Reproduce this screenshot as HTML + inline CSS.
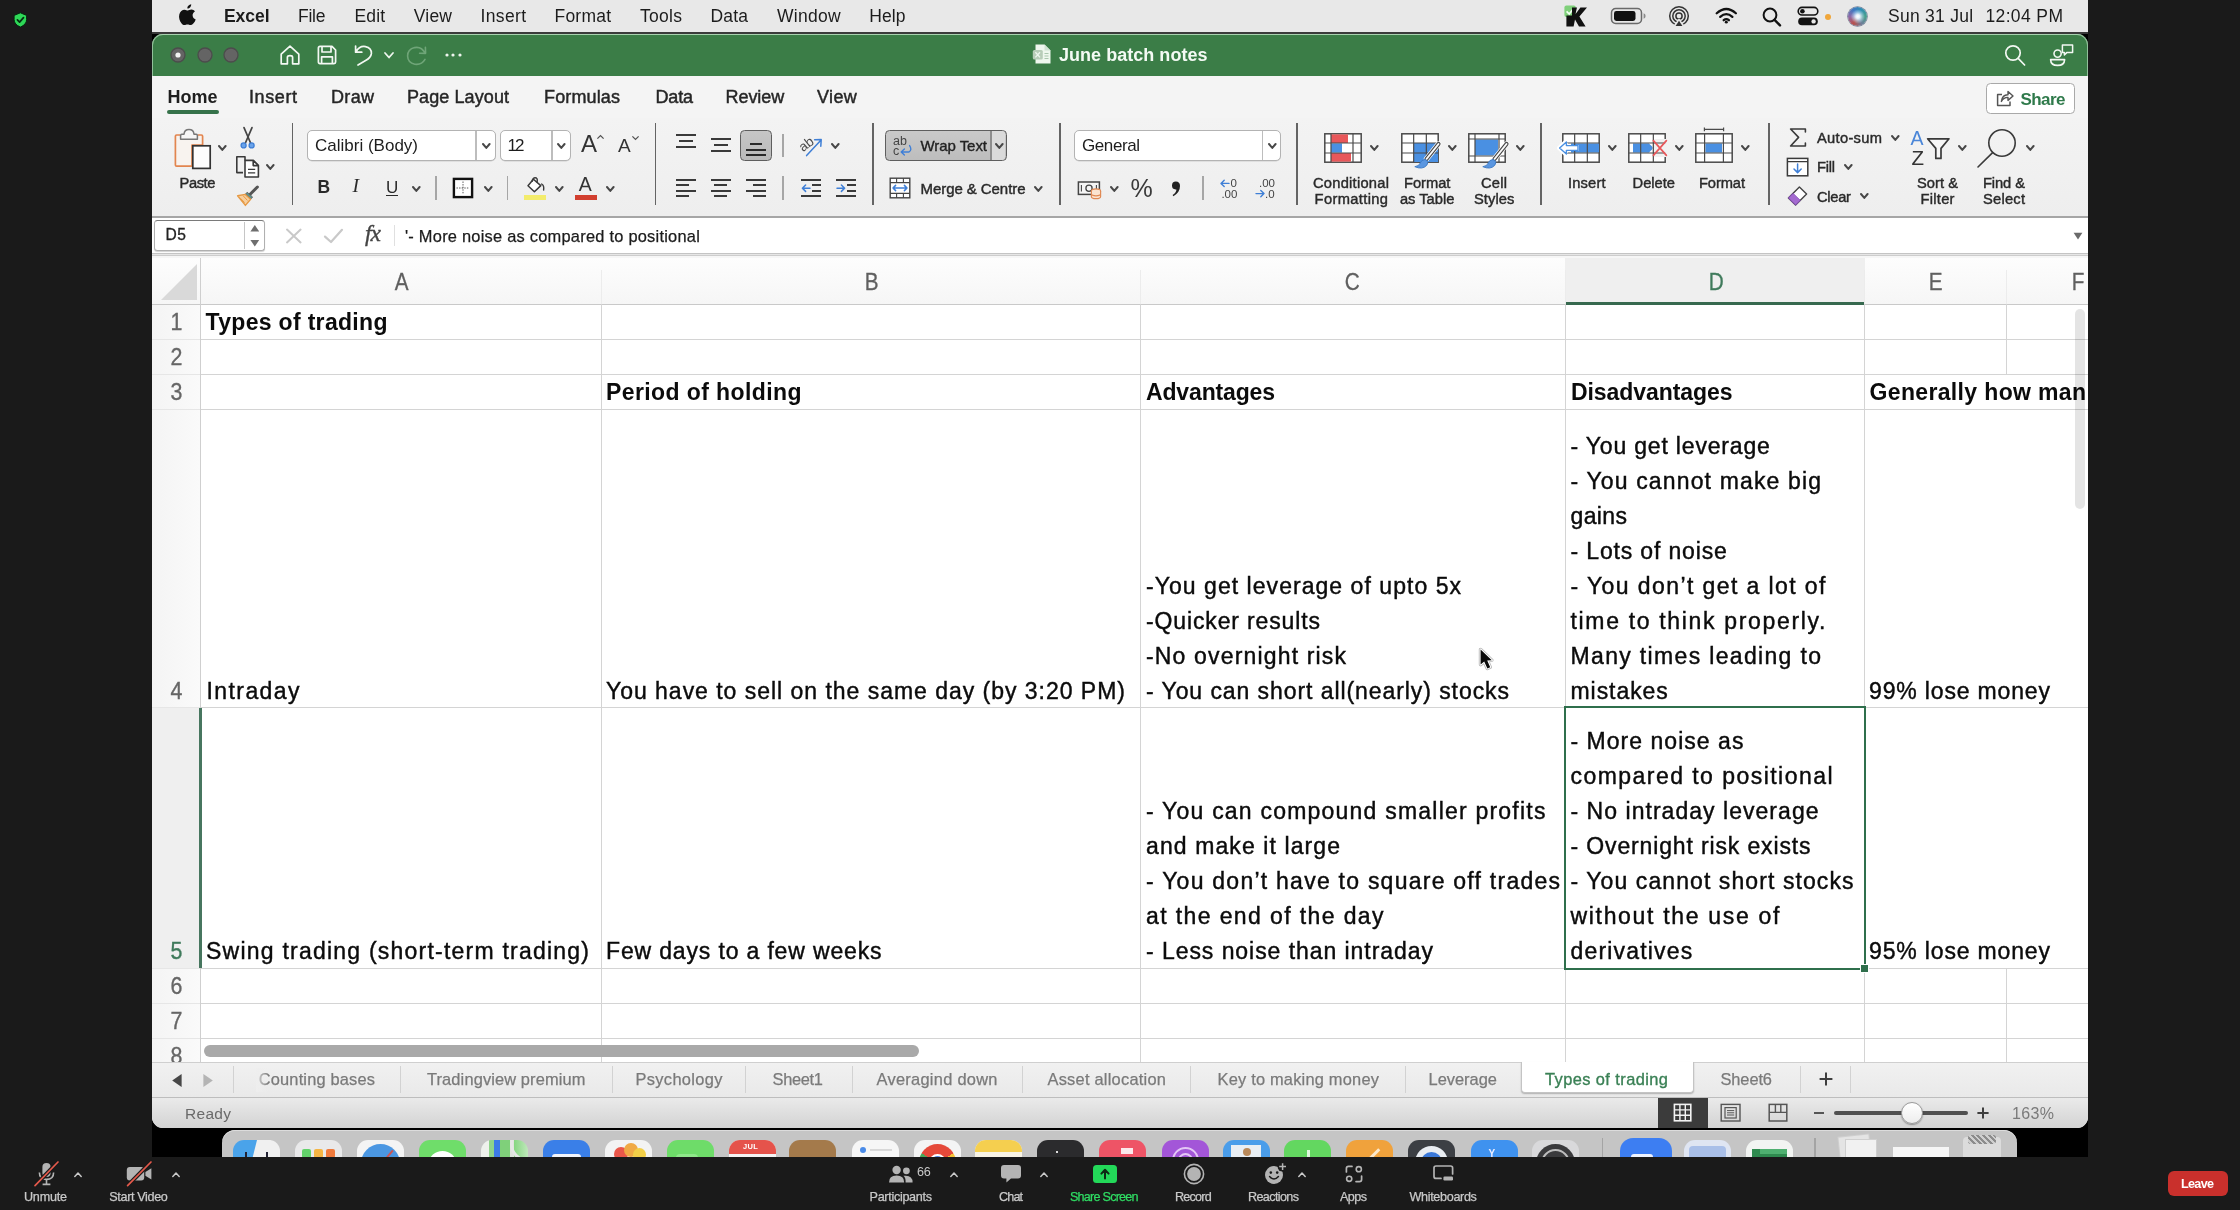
<!DOCTYPE html>
<html><head><meta charset="utf-8"><title>Zoom Meeting</title>
<style>
html,body{margin:0;padding:0}
body{width:2240px;height:1210px;background:#1a1a1a;position:relative;overflow:hidden;font-family:"Liberation Sans",sans-serif}
.b{position:absolute;display:block}
.t{position:absolute;white-space:nowrap;font-family:"Liberation Sans",sans-serif}
</style></head><body><div id="root" style="position:absolute;left:0;top:0;width:2240px;height:1210px;will-change:transform">
<div class="b" style="left:152px;top:0px;width:1936px;height:1157px;background:#000"></div>
<div class="b" style="left:152px;top:0px;width:1936px;height:32px;background:#e8e8e8"></div>
<div class="b" style="left:152px;top:32px;width:1936px;height:2px;background:#3a3a3a"></div>
<div class="b" id="win" style="left:152px;top:34px;width:1936px;height:1094px;border-radius:11px 11px 11px 11px;overflow:hidden;background:#fff">
<div class="b" style="left:-152px;top:-34px;width:2240px;height:1210px">
<div class="b" style="left:152px;top:34px;width:1936px;height:42px;background:#3b7d47"></div>
<div class="b" style="left:152px;top:34px;width:1936px;height:1px;background:#8fbf98"></div>
<div class="b" style="left:152px;top:34px;width:1936px;height:60px;border:1px solid rgba(175,215,182,.75);border-bottom:none;border-radius:11px 11px 0 0;box-sizing:border-box;clip-path:inset(0 0 18px 0)"></div>
<div class="b" style="left:152px;top:76px;width:1936px;height:42px;background:#f4f4f4"></div>
<div class="b" style="left:152px;top:118px;width:1936px;height:98px;background:linear-gradient(#f3f3f3,#eeeeee)"></div>
<div class="b" style="left:152px;top:216px;width:1936px;height:2px;background:#a6a6a6"></div>
<div class="b" style="left:152px;top:218px;width:1936px;height:36px;background:#fff"></div>
<div class="b" style="left:152px;top:253px;width:1936px;height:1px;background:#c4c4c4"></div>
<div class="b" style="left:152px;top:254px;width:1936px;height:1px;background:#e6e6e6"></div>
<div class="b" style="left:152px;top:255px;width:1936px;height:1px;background:#cdcdcd"></div>
<div class="b" style="left:152px;top:256px;width:1936px;height:2px;background:#f6f6f6"></div>
<div class="b" style="left:152px;top:258px;width:1936px;height:46px;background:linear-gradient(#fdfdfd,#f6f6f6)"></div>
<div class="b" style="left:152px;top:304px;width:48px;height:758px;background:linear-gradient(90deg,#f4f4f4,#fafafa)"></div>
<div class="b" style="left:152px;top:708px;width:47px;height:260px;background:#efefef"></div>
<div class="b" style="left:1565px;top:258px;width:300px;height:45px;background:#efefef"></div>
<div class="b" style="left:1565px;top:302px;width:300px;height:2.6px;background:#37694f"></div>
<div class="b" style="left:152px;top:304px;width:1413px;height:1px;background:#c9c9c9"></div>
<div class="b" style="left:1865px;top:304px;width:223px;height:1px;background:#c9c9c9"></div>
<div class="b" style="left:200px;top:339px;width:1888px;height:1px;background:#d4d4d4"></div>
<div class="b" style="left:152px;top:339px;width:48px;height:1px;background:#e6e6e6"></div>
<div class="b" style="left:200px;top:374px;width:1888px;height:1px;background:#d4d4d4"></div>
<div class="b" style="left:152px;top:374px;width:48px;height:1px;background:#e6e6e6"></div>
<div class="b" style="left:200px;top:409px;width:1888px;height:1px;background:#d4d4d4"></div>
<div class="b" style="left:152px;top:409px;width:48px;height:1px;background:#e6e6e6"></div>
<div class="b" style="left:200px;top:707px;width:1888px;height:1px;background:#d4d4d4"></div>
<div class="b" style="left:152px;top:707px;width:48px;height:1px;background:#e6e6e6"></div>
<div class="b" style="left:200px;top:968px;width:1888px;height:1px;background:#d4d4d4"></div>
<div class="b" style="left:152px;top:968px;width:48px;height:1px;background:#e6e6e6"></div>
<div class="b" style="left:200px;top:1003px;width:1888px;height:1px;background:#d4d4d4"></div>
<div class="b" style="left:152px;top:1003px;width:48px;height:1px;background:#e6e6e6"></div>
<div class="b" style="left:200px;top:1038px;width:1888px;height:1px;background:#d4d4d4"></div>
<div class="b" style="left:152px;top:1038px;width:48px;height:1px;background:#e6e6e6"></div>
<div class="b" style="left:200px;top:258px;width:1px;height:804px;background:#cfcfcf"></div>
<div class="b" style="left:601px;top:304px;width:1px;height:758px;background:#d4d4d4"></div>
<div class="b" style="left:1140px;top:304px;width:1px;height:758px;background:#d4d4d4"></div>
<div class="b" style="left:1565px;top:304px;width:1px;height:758px;background:#d4d4d4"></div>
<div class="b" style="left:1864px;top:304px;width:1px;height:758px;background:#d4d4d4"></div>
<div class="b" style="left:601px;top:270px;width:1px;height:34px;background:#ececec"></div>
<div class="b" style="left:1140px;top:270px;width:1px;height:34px;background:#ececec"></div>
<div class="b" style="left:1565px;top:270px;width:1px;height:34px;background:#ececec"></div>
<div class="b" style="left:1864px;top:270px;width:1px;height:34px;background:#ececec"></div>
<div class="b" style="left:2006px;top:270px;width:1px;height:34px;background:#ececec"></div>
<div class="b" style="left:2006px;top:304px;width:1px;height:70px;background:#d4d4d4"></div>
<div class="b" style="left:2006px;top:968px;width:1px;height:94px;background:#d4d4d4"></div>
<svg class="b" style="left:160px;top:263px;" width="38" height="38" viewBox="0 0 38 38"><path d="M37 1 L37 37 L1 37 Z" fill="#d9d9d9"/></svg>
<div class="t" style="left:393.83px;top:269.00px;font-size:23px;line-height:26px;color:#5f5f5f;letter-spacing:0.000px;transform:scaleX(.9);-webkit-text-stroke:0.3px currentColor;">A</div>
<div class="t" style="left:863.83px;top:269.00px;font-size:23px;line-height:26px;color:#5f5f5f;letter-spacing:0.000px;transform:scaleX(.9);-webkit-text-stroke:0.3px currentColor;">B</div>
<div class="t" style="left:1344.20px;top:269.00px;font-size:23px;line-height:26px;color:#5f5f5f;letter-spacing:0.000px;transform:scaleX(.9);-webkit-text-stroke:0.3px currentColor;">C</div>
<div class="t" style="left:1927.83px;top:269.00px;font-size:23px;line-height:26px;color:#5f5f5f;letter-spacing:0.000px;transform:scaleX(.9);-webkit-text-stroke:0.3px currentColor;">E</div>
<div class="t" style="left:2070.98px;top:269.00px;font-size:23px;line-height:26px;color:#5f5f5f;letter-spacing:0.000px;transform:scaleX(.9);-webkit-text-stroke:0.3px currentColor;">F</div>
<div class="t" style="left:1707.70px;top:269.00px;font-size:23px;line-height:26px;color:#3f7a5b;letter-spacing:0.000px;transform:scaleX(.9);-webkit-text-stroke:0.3px currentColor;">D</div>
<div class="t" style="left:170.10px;top:309.00px;font-size:23px;line-height:26px;color:#666;letter-spacing:0.000px;transform:scaleX(.93);-webkit-text-stroke:0.35px #666;">1</div>
<div class="t" style="left:170.10px;top:344.00px;font-size:23px;line-height:26px;color:#666;letter-spacing:0.000px;transform:scaleX(.93);-webkit-text-stroke:0.35px #666;">2</div>
<div class="t" style="left:170.10px;top:379.00px;font-size:23px;line-height:26px;color:#666;letter-spacing:0.000px;transform:scaleX(.93);-webkit-text-stroke:0.35px #666;">3</div>
<div class="t" style="left:170.10px;top:678.00px;font-size:23px;line-height:26px;color:#666;letter-spacing:0.000px;transform:scaleX(.93);-webkit-text-stroke:0.35px #666;">4</div>
<div class="t" style="left:170.10px;top:973.00px;font-size:23px;line-height:26px;color:#666;letter-spacing:0.000px;transform:scaleX(.93);-webkit-text-stroke:0.35px #666;">6</div>
<div class="t" style="left:170.10px;top:1008.00px;font-size:23px;line-height:26px;color:#666;letter-spacing:0.000px;transform:scaleX(.93);-webkit-text-stroke:0.35px #666;">7</div>
<div class="t" style="left:170.10px;top:1043.00px;font-size:23px;line-height:26px;color:#666;letter-spacing:0.000px;transform:scaleX(.93);-webkit-text-stroke:0.35px #666;">8</div>
<div class="t" style="left:170.10px;top:938.00px;font-size:23px;line-height:26px;color:#3f7a5b;letter-spacing:0.000px;transform:scaleX(.93);-webkit-text-stroke:0.35px #3f7a5b;">5</div>
<div class="b" style="left:198.8px;top:708px;width:2.8px;height:260px;background:#47765f"></div>
<div class="t" style="left:205.50px;top:309.00px;font-size:23px;line-height:26px;font-weight:bold;color:#0b0b0b;letter-spacing:0.320px;">Types of trading</div>
<div class="t" style="left:606.00px;top:379.00px;font-size:23px;line-height:26px;font-weight:bold;color:#0b0b0b;letter-spacing:0.401px;">Period of holding</div>
<div class="t" style="left:1146.00px;top:379.00px;font-size:23px;line-height:26px;font-weight:bold;color:#0b0b0b;letter-spacing:-0.153px;">Advantages</div>
<div class="t" style="left:1571.00px;top:379.00px;font-size:23px;line-height:26px;font-weight:bold;color:#0b0b0b;letter-spacing:-0.071px;">Disadvantages</div>
<div class="b" style="left:1865px;top:376px;width:223px;height:32px;overflow:hidden">
<div class="t" style="left:4.5px;top:3px;font-size:23px;line-height:26px;font-weight:bold;color:#0b0b0b;letter-spacing:0.35px">Generally how man</div></div>
<div class="t" style="left:206.50px;top:678.00px;font-size:23px;line-height:26px;color:#0b0b0b;letter-spacing:1.413px;-webkit-text-stroke:0.42px #0b0b0b;">Intraday</div>
<div class="t" style="left:606.00px;top:678.00px;font-size:23px;line-height:26px;color:#0b0b0b;letter-spacing:0.976px;-webkit-text-stroke:0.42px #0b0b0b;">You have to sell on the same day (by 3:20 PM)</div>
<div class="t" style="left:1146.00px;top:573.00px;font-size:23px;line-height:26px;color:#0b0b0b;letter-spacing:1.042px;-webkit-text-stroke:0.42px #0b0b0b;">-You get leverage of upto 5x</div>
<div class="t" style="left:1146.00px;top:608.00px;font-size:23px;line-height:26px;color:#0b0b0b;letter-spacing:0.864px;-webkit-text-stroke:0.42px #0b0b0b;">-Quicker results</div>
<div class="t" style="left:1146.00px;top:643.00px;font-size:23px;line-height:26px;color:#0b0b0b;letter-spacing:1.163px;-webkit-text-stroke:0.42px #0b0b0b;">-No overnight risk</div>
<div class="t" style="left:1146.00px;top:678.00px;font-size:23px;line-height:26px;color:#0b0b0b;letter-spacing:0.928px;-webkit-text-stroke:0.42px #0b0b0b;">- You can short all(nearly) stocks</div>
<div class="t" style="left:1570.50px;top:433.00px;font-size:23px;line-height:26px;color:#0b0b0b;letter-spacing:0.816px;-webkit-text-stroke:0.42px #0b0b0b;">- You get leverage</div>
<div class="t" style="left:1570.50px;top:468.00px;font-size:23px;line-height:26px;color:#0b0b0b;letter-spacing:1.145px;-webkit-text-stroke:0.42px #0b0b0b;">- You cannot make big</div>
<div class="t" style="left:1570.50px;top:503.00px;font-size:23px;line-height:26px;color:#0b0b0b;letter-spacing:0.354px;-webkit-text-stroke:0.42px #0b0b0b;">gains</div>
<div class="t" style="left:1570.50px;top:538.00px;font-size:23px;line-height:26px;color:#0b0b0b;letter-spacing:0.845px;-webkit-text-stroke:0.42px #0b0b0b;">- Lots of noise</div>
<div class="t" style="left:1570.50px;top:573.00px;font-size:23px;line-height:26px;color:#0b0b0b;letter-spacing:1.408px;-webkit-text-stroke:0.42px #0b0b0b;">- You don’t get a lot of</div>
<div class="t" style="left:1570.50px;top:608.00px;font-size:23px;line-height:26px;color:#0b0b0b;letter-spacing:1.670px;-webkit-text-stroke:0.42px #0b0b0b;">time to think properly.</div>
<div class="t" style="left:1570.50px;top:643.00px;font-size:23px;line-height:26px;color:#0b0b0b;letter-spacing:1.339px;-webkit-text-stroke:0.42px #0b0b0b;">Many times leading to</div>
<div class="t" style="left:1570.50px;top:678.00px;font-size:23px;line-height:26px;color:#0b0b0b;letter-spacing:0.937px;-webkit-text-stroke:0.42px #0b0b0b;">mistakes</div>
<div class="t" style="left:1869.00px;top:678.00px;font-size:23px;line-height:26px;color:#0b0b0b;letter-spacing:0.843px;-webkit-text-stroke:0.42px #0b0b0b;">99% lose money</div>
<div class="t" style="left:206.00px;top:938.00px;font-size:23px;line-height:26px;color:#0b0b0b;letter-spacing:1.225px;-webkit-text-stroke:0.42px #0b0b0b;">Swing trading (short-term trading)</div>
<div class="t" style="left:606.00px;top:938.00px;font-size:23px;line-height:26px;color:#0b0b0b;letter-spacing:0.844px;-webkit-text-stroke:0.42px #0b0b0b;">Few days to a few weeks</div>
<div class="t" style="left:1146.00px;top:798.00px;font-size:23px;line-height:26px;color:#0b0b0b;letter-spacing:1.217px;-webkit-text-stroke:0.42px #0b0b0b;">- You can compound smaller profits</div>
<div class="t" style="left:1146.00px;top:833.00px;font-size:23px;line-height:26px;color:#0b0b0b;letter-spacing:1.098px;-webkit-text-stroke:0.42px #0b0b0b;">and make it large</div>
<div class="t" style="left:1146.00px;top:868.00px;font-size:23px;line-height:26px;color:#0b0b0b;letter-spacing:1.247px;-webkit-text-stroke:0.42px #0b0b0b;">- You don’t have to square off trades</div>
<div class="t" style="left:1146.00px;top:903.00px;font-size:23px;line-height:26px;color:#0b0b0b;letter-spacing:1.389px;-webkit-text-stroke:0.42px #0b0b0b;">at the end of the day</div>
<div class="t" style="left:1146.00px;top:938.00px;font-size:23px;line-height:26px;color:#0b0b0b;letter-spacing:0.945px;-webkit-text-stroke:0.42px #0b0b0b;">- Less noise than intraday</div>
<div class="t" style="left:1570.50px;top:728.00px;font-size:23px;line-height:26px;color:#0b0b0b;letter-spacing:1.028px;-webkit-text-stroke:0.42px #0b0b0b;">- More noise as</div>
<div class="t" style="left:1570.50px;top:763.00px;font-size:23px;line-height:26px;color:#0b0b0b;letter-spacing:1.456px;-webkit-text-stroke:0.42px #0b0b0b;">compared to positional</div>
<div class="t" style="left:1570.50px;top:798.00px;font-size:23px;line-height:26px;color:#0b0b0b;letter-spacing:1.034px;-webkit-text-stroke:0.42px #0b0b0b;">- No intraday leverage</div>
<div class="t" style="left:1570.50px;top:833.00px;font-size:23px;line-height:26px;color:#0b0b0b;letter-spacing:0.859px;-webkit-text-stroke:0.42px #0b0b0b;">- Overnight risk exists</div>
<div class="t" style="left:1570.50px;top:868.00px;font-size:23px;line-height:26px;color:#0b0b0b;letter-spacing:1.084px;-webkit-text-stroke:0.42px #0b0b0b;">- You cannot short stocks</div>
<div class="t" style="left:1570.50px;top:903.00px;font-size:23px;line-height:26px;color:#0b0b0b;letter-spacing:1.677px;-webkit-text-stroke:0.42px #0b0b0b;">without the use of</div>
<div class="t" style="left:1570.50px;top:938.00px;font-size:23px;line-height:26px;color:#0b0b0b;letter-spacing:1.176px;-webkit-text-stroke:0.42px #0b0b0b;">derivatives</div>
<div class="t" style="left:1869.00px;top:938.00px;font-size:23px;line-height:26px;color:#0b0b0b;letter-spacing:0.843px;-webkit-text-stroke:0.42px #0b0b0b;">95% lose money</div>
<div class="b" style="left:1564px;top:706px;width:302px;height:264px;border:2px solid #2f6f4c;box-sizing:border-box"></div>
<div class="b" style="left:1860px;top:964px;width:9px;height:9px;background:#fff"></div>
<div class="b" style="left:1861px;top:965px;width:7px;height:7px;background:#2f6f4c"></div>
<div class="b" style="left:2075px;top:309px;width:10px;height:200px;background:rgba(0,0,0,.105);border-radius:5px"></div>
<div class="b" style="left:204px;top:1045px;width:715px;height:12px;background:#a9a9a9;border-radius:6px"></div>
<svg class="b" style="left:1474px;top:642px;" width="24" height="32" viewBox="0 0 24 32"><path d="M6.6 7.6 L6.6 22.6 L10.2 19.4 L13.4 26.4 L16.2 25.2 L13.2 18.4 L17.8 18.2 Z" fill="#0a0a0a" stroke="rgba(120,120,120,.55)" stroke-width="3.6" stroke-linejoin="round"/><path d="M6.6 7.6 L6.6 22.6 L10.2 19.4 L13.4 26.4 L16.2 25.2 L13.2 18.4 L17.8 18.2 Z" fill="#0a0a0a" stroke="#fff" stroke-width="2" stroke-linejoin="round"/><path d="M6.6 7.6 L6.6 22.6 L10.2 19.4 L13.4 26.4 L16.2 25.2 L13.2 18.4 L17.8 18.2 Z" fill="#0a0a0a"/></svg>
<svg class="b" style="left:167.5px;top:45px;" width="20" height="20" viewBox="0 0 20 20"><circle cx="10" cy="10" r="7" fill="#646464" stroke="#4c4c4c" stroke-width="1.3"/></svg>
<svg class="b" style="left:194.5px;top:45px;" width="20" height="20" viewBox="0 0 20 20"><circle cx="10" cy="10" r="7" fill="#646464" stroke="#4c4c4c" stroke-width="1.3"/></svg>
<svg class="b" style="left:221px;top:45px;" width="20" height="20" viewBox="0 0 20 20"><circle cx="10" cy="10" r="7" fill="#646464" stroke="#4c4c4c" stroke-width="1.3"/></svg>
<svg class="b" style="left:173.5px;top:51px;" width="8" height="8" viewBox="0 0 8 8"><circle cx="4" cy="4" r="2.6" fill="#f2f2f2"/></svg>
<svg class="b" style="left:279px;top:44px;" width="22" height="22" viewBox="0 0 22 22"><path d="M2.2 10.2 L11 2.2 L19.8 10.2 L19.8 19.8 L13.6 19.8 L13.6 13.2 Q13.6 11.6 11 11.6 Q8.4 11.6 8.4 13.2 L8.4 19.8 L2.2 19.8 Z" fill="none" stroke="#f3f8f3" stroke-width="1.7" stroke-linecap="round" stroke-linejoin="round"/></svg>
<svg class="b" style="left:316px;top:44px;" width="22" height="22" viewBox="0 0 22 22"><path d="M2.4 4 Q2.4 2.4 4 2.4 L16 2.4 L19.6 6 L19.6 18 Q19.6 19.6 18 19.6 L4 19.6 Q2.4 19.6 2.4 18 Z M6 2.6 L6 8 L15 8 L15 2.6 M5.6 19.4 L5.6 12.8 L16.4 12.8 L16.4 19.4" fill="none" stroke="#f3f8f3" stroke-width="1.7" stroke-linecap="round" stroke-linejoin="round"/></svg>
<svg class="b" style="left:353px;top:43px;" width="22" height="24" viewBox="0 0 22 24"><path d="M2.6 3 L2.6 9.2 L8.8 9.2 M3 8.8 Q6.5 2.6 12.5 3.6 Q18.6 5 18.4 10.4 Q18 14.6 12.6 17.6 L5 22" fill="none" stroke="#f3f8f3" stroke-width="1.7" stroke-linecap="round" stroke-linejoin="round"/></svg>
<svg class="b" style="left:382.7px;top:51.25px;" width="12" height="8.5" viewBox="0 0 12 8.5"><path d="M2 2 L6.0 6.5 L10 2" fill="none" stroke="#eef5ee" stroke-width="1.8" stroke-linecap="round" stroke-linejoin="round"/></svg>
<svg class="b" style="left:404px;top:43px;" width="26" height="24" viewBox="0 0 26 24"><path d="M21.4 4.4 L21.6 10.4 L15.6 10.2 M21 10 Q17.4 3.2 10.6 4.6 Q3.6 6.4 3.6 13 Q3.8 19.8 10.8 21.2 Q17.6 22.2 21 16.4" fill="none" stroke="#6fa578" stroke-width="1.6" stroke-linecap="round" stroke-linejoin="round"/></svg>
<svg class="b" style="left:444.5px;top:53px;" width="4" height="4" viewBox="0 0 4 4"><circle cx="2" cy="2" r="1.6" fill="#eef5ee"/></svg>
<svg class="b" style="left:451.3px;top:53px;" width="4" height="4" viewBox="0 0 4 4"><circle cx="2" cy="2" r="1.6" fill="#eef5ee"/></svg>
<svg class="b" style="left:458px;top:53px;" width="4" height="4" viewBox="0 0 4 4"><circle cx="2" cy="2" r="1.6" fill="#eef5ee"/></svg>
<svg class="b" style="left:1032px;top:43px;" width="20" height="22" viewBox="0 0 20 22"><path d="M3.5 1.5 L12.5 1.5 L18.5 7.5 L18.5 20.5 L3.5 20.5 Z" fill="#eef7ee"/><path d="M12.5 1.5 L12.5 7.5 L18.5 7.5 Z" fill="#cfe3d2"/><rect x="0.8" y="7" width="10" height="9.5" rx="1.5" fill="#b8cdb9"/><path d="M3.4 9.3 L8 14.4 M8 9.3 L3.4 14.4" stroke="#eef7ee" stroke-width="1.3"/><path d="M12.5 10.5h4M12.5 13h4M12.5 15.5h4" stroke="#a9c6ad" stroke-width="1.2"/></svg>
<div class="t" style="left:1059.00px;top:45.00px;font-size:18px;line-height:20px;font-weight:bold;color:#f4faf4;letter-spacing:0.032px;">June batch notes</div>
<svg class="b" style="left:2003px;top:43px;" width="24" height="24" viewBox="0 0 24 24"><circle cx="10" cy="10" r="7.2" fill="none" stroke="#f3f8f3" stroke-width="1.7" stroke-linecap="round" stroke-linejoin="round"/><path d="M15.2 15.4 L21.6 22" fill="none" stroke="#f3f8f3" stroke-width="1.7" stroke-linecap="round" stroke-linejoin="round"/></svg>
<svg class="b" style="left:2048px;top:42px;" width="28" height="26" viewBox="0 0 28 26"><circle cx="9.6" cy="11.6" r="3.6" fill="none" stroke="#f3f8f3" stroke-width="1.6"/><path d="M2.6 17.6 L16.6 17.6 Q16.4 23.4 9.6 23.4 Q2.8 23.4 2.6 17.6 Z" fill="none" stroke="#f3f8f3" stroke-width="1.6" stroke-linejoin="round"/><path d="M14.4 3 L24.6 3 L24.6 10.4 L19 10.4 L16.4 13 L16.4 10.4 L14.4 10.4 Z" fill="none" stroke="#f3f8f3" stroke-width="1.5" stroke-linejoin="round"/></svg>
<div class="t" style="left:167.50px;top:87.00px;font-size:18px;line-height:20px;font-weight:bold;color:#1e1e1e;letter-spacing:-0.003px;">Home</div>
<div class="b" style="left:166.5px;top:110px;width:52px;height:4px;background:#36724a;border-radius:2px"></div>
<div class="t" style="left:249.00px;top:87.00px;font-size:18px;line-height:20px;color:#262626;letter-spacing:0.596px;-webkit-text-stroke:0.45px #262626;">Insert</div>
<div class="t" style="left:331.00px;top:87.00px;font-size:18px;line-height:20px;color:#262626;letter-spacing:0.332px;-webkit-text-stroke:0.45px #262626;">Draw</div>
<div class="t" style="left:407.00px;top:87.00px;font-size:18px;line-height:20px;color:#262626;letter-spacing:0.092px;-webkit-text-stroke:0.45px #262626;">Page Layout</div>
<div class="t" style="left:544.00px;top:87.00px;font-size:18px;line-height:20px;color:#262626;letter-spacing:0.141px;-webkit-text-stroke:0.45px #262626;">Formulas</div>
<div class="t" style="left:655.50px;top:87.00px;font-size:18px;line-height:20px;color:#262626;letter-spacing:-0.174px;-webkit-text-stroke:0.45px #262626;">Data</div>
<div class="t" style="left:725.50px;top:87.00px;font-size:18px;line-height:20px;color:#262626;letter-spacing:-0.054px;-webkit-text-stroke:0.45px #262626;">Review</div>
<div class="t" style="left:817.00px;top:87.00px;font-size:18px;line-height:20px;color:#262626;letter-spacing:0.353px;-webkit-text-stroke:0.45px #262626;">View</div>
<div class="b" style="left:1985.5px;top:82.5px;width:89px;height:31.5px;background:#fff;border:1.5px solid #a9a9a9;border-radius:4.5px;box-sizing:border-box"></div>
<svg class="b" style="left:1995px;top:88px;" width="20" height="20" viewBox="0 0 20 20"><path d="M7 6.4 L2.6 6.4 L2.6 17.4 L15 17.4 L15 13.6" fill="none" stroke="#555" stroke-width="1.5" stroke-linejoin="round"/><path d="M6.4 13.4 Q7.4 6.6 13 6.8 L13 3.4 L18 8 L13 12.4 L13 9.4 Q9 9.2 6.4 13.4 Z" fill="none" stroke="#555" stroke-width="1.4" stroke-linejoin="round"/></svg>
<div class="t" style="left:2020.50px;top:90.00px;font-size:17px;line-height:19px;font-weight:bold;color:#2f7a4b;letter-spacing:-0.562px;">Share</div>
<div class="b" style="left:291.825px;top:122.5px;width:1.35px;height:82.5px;background:#646464"></div>
<div class="b" style="left:654.825px;top:122.5px;width:1.35px;height:82.5px;background:#646464"></div>
<div class="b" style="left:872.325px;top:122.5px;width:1.35px;height:82.5px;background:#646464"></div>
<div class="b" style="left:1059.325px;top:122.5px;width:1.35px;height:82.5px;background:#646464"></div>
<div class="b" style="left:1296.325px;top:122.5px;width:1.35px;height:82.5px;background:#646464"></div>
<div class="b" style="left:1540.325px;top:122.5px;width:1.35px;height:82.5px;background:#646464"></div>
<div class="b" style="left:1768.325px;top:122.5px;width:1.35px;height:82.5px;background:#646464"></div>
<svg class="b" style="left:173px;top:127px;" width="40" height="44" viewBox="0 0 40 44"><path d="M7 8 L3.6 8 Q2.4 8 2.4 9.2 L2.4 38 Q2.4 39.2 3.6 39.2 L19 39.2 L19 18 L29.6 18 L29.6 9.2 Q29.6 8 28.4 8 L25 8" fill="#f8f3ef" stroke="#e2854f" stroke-width="1.7" stroke-linejoin="round"/><path d="M7.6 12.2 L7.6 8.4 Q7.6 7.2 8.8 7.2 L11 7.2 Q11.4 2.4 16 2.4 Q20.6 2.4 21 7.2 L23.2 7.2 Q24.4 7.2 24.4 8.4 L24.4 12.2 Z" fill="#f6f6f6" stroke="#777" stroke-width="1.5" stroke-linejoin="round"/><rect x="19.8" y="18.8" width="17.4" height="22.6" fill="#fdfdfd" stroke="#333" stroke-width="1.7"/></svg>
<svg class="b" style="left:217.2px;top:143.55px;" width="10.6" height="7.9" viewBox="0 0 10.6 7.9"><path d="M2 2 L5.3 5.9 L8.6 2" fill="none" stroke="#484848" stroke-width="2.0" stroke-linecap="round" stroke-linejoin="round"/></svg>
<div class="t" style="left:179.50px;top:175.00px;font-size:14.7px;line-height:16px;color:#2a2a2a;letter-spacing:-0.397px;-webkit-text-stroke:0.42px #2a2a2a;">Paste</div>
<svg class="b" style="left:239px;top:126px;" width="18" height="24" viewBox="0 0 18 24"><path d="M5 1.6 L11.6 17 M13 1.6 L6.4 17" stroke="#444" stroke-width="1.7" stroke-linecap="round" fill="none"/><circle cx="4.6" cy="19.4" r="2.5" fill="#6aa3ea" stroke="#3f7fd6" stroke-width="1.3"/><circle cx="12.6" cy="19.4" r="2.5" fill="#6aa3ea" stroke="#3f7fd6" stroke-width="1.3"/></svg>
<svg class="b" style="left:235px;top:155px;" width="26" height="24" viewBox="0 0 26 24"><path d="M10 5.4 L10 1.8 L1.8 1.8 L1.8 17.6 L8 17.6" fill="none" stroke="#3a3a3a" stroke-width="1.6" stroke-linejoin="round"/><path d="M10 5.4 L18.4 5.4 L23.4 10.4 L23.4 22 L10 22 Z M18.2 5.6 L18.2 10.6 L23.2 10.6" fill="#fff" stroke="#3a3a3a" stroke-width="1.6" stroke-linejoin="round"/><path d="M13 14.4 h7.2 M13 17.8 h7.2" stroke="#3a3a3a" stroke-width="1.3"/></svg>
<svg class="b" style="left:265.2px;top:163.05px;" width="10.6" height="7.9" viewBox="0 0 10.6 7.9"><path d="M2 2 L5.3 5.9 L8.6 2" fill="none" stroke="#484848" stroke-width="2.0" stroke-linecap="round" stroke-linejoin="round"/></svg>
<svg class="b" style="left:236px;top:184px;" width="26" height="24" viewBox="0 0 26 24"><path d="M21.4 3 L14.4 10" stroke="#555" stroke-width="3" stroke-linecap="round"/><path d="M11.2 8.2 L16.6 13 L14.8 15 L9.4 10.2 Z" fill="#5f8f8a" stroke="#555" stroke-width="0.8"/><path d="M9.2 10.4 L14.6 15.2 L9.4 21.4 L1.6 11.8 Z" fill="#f7cf9e" stroke="#e69a45" stroke-width="1.4" stroke-linejoin="round"/><path d="M4.6 14.4 L8.6 18.6 M7 11.6 L11.4 16.4" stroke="#e69a45" stroke-width="1"/></svg>
<div class="b" style="left:307px;top:129.5px;width:189px;height:31.5px;background:#fff;border:1.5px solid #b3b3b3;border-radius:5px;box-sizing:border-box;box-shadow:0 0.5px 0.5px rgba(0,0,0,.15)"></div>
<div class="b" style="left:475.4px;top:131px;width:1.3px;height:28.5px;background:#bdbdbd"></div>
<div class="t" style="left:315.00px;top:136.00px;font-size:17px;line-height:19px;color:#1d1d1d;letter-spacing:0.002px;">Calibri (Body)</div>
<svg class="b" style="left:480.5px;top:142.25px;" width="10.6" height="7.9" viewBox="0 0 10.6 7.9"><path d="M2 2 L5.3 5.9 L8.6 2" fill="none" stroke="#484848" stroke-width="2.0" stroke-linecap="round" stroke-linejoin="round"/></svg>
<div class="b" style="left:499.5px;top:129.5px;width:71.5px;height:31.5px;background:#fff;border:1.5px solid #b3b3b3;border-radius:5px;box-sizing:border-box;box-shadow:0 0.5px 0.5px rgba(0,0,0,.15)"></div>
<div class="b" style="left:551.4px;top:131px;width:1.3px;height:28.5px;background:#bdbdbd"></div>
<div class="t" style="left:507.50px;top:136.00px;font-size:17px;line-height:19px;color:#1d1d1d;letter-spacing:-1.909px;">12</div>
<svg class="b" style="left:556.2px;top:142.25px;" width="10.6" height="7.9" viewBox="0 0 10.6 7.9"><path d="M2 2 L5.3 5.9 L8.6 2" fill="none" stroke="#484848" stroke-width="2.0" stroke-linecap="round" stroke-linejoin="round"/></svg>
<div class="t" style="left:581.00px;top:130.00px;font-size:24px;line-height:27px;color:#333;letter-spacing:0.000px;font-weight:normal">A</div>
<svg class="b" style="left:596px;top:134px;" width="9" height="6" viewBox="0 0 9 6"><path d="M1.4 4.6 L4.5 1.6 L7.6 4.6" fill="none" stroke="#555" stroke-width="1.3"/></svg>
<div class="t" style="left:618.00px;top:135.00px;font-size:19px;line-height:21px;color:#333;letter-spacing:0.000px;">A</div>
<svg class="b" style="left:630.5px;top:135px;" width="9" height="6" viewBox="0 0 9 6"><path d="M1.4 1.4 L4.5 4.4 L7.6 1.4" fill="none" stroke="#555" stroke-width="1.3"/></svg>
<div class="t" style="left:317.50px;top:177.00px;font-size:17.5px;line-height:20px;font-weight:bold;color:#2a2a2a;letter-spacing:0.000px;">B</div>
<div class="t" style="left:352.5px;top:174.6px;font-family:'Liberation Serif',serif;font-style:italic;font-size:19.5px;line-height:22px;color:#2a2a2a">I</div>
<div class="t" style="left:386.00px;top:178.00px;font-size:17px;line-height:19px;color:#2a2a2a;letter-spacing:0.000px;">U</div>
<div class="b" style="left:385.5px;top:195px;width:12.5px;height:1.4px;background:#2a2a2a"></div>
<svg class="b" style="left:411.4px;top:184.55px;" width="10.6" height="7.9" viewBox="0 0 10.6 7.9"><path d="M2 2 L5.3 5.9 L8.6 2" fill="none" stroke="#484848" stroke-width="2.0" stroke-linecap="round" stroke-linejoin="round"/></svg>
<div class="b" style="left:435.1px;top:176px;width:1.8px;height:23.5px;background:#a6a6a6"></div>
<svg class="b" style="left:452px;top:176.5px;" width="22" height="22" viewBox="0 0 22 22"><rect x="1.9" y="1.9" width="18.2" height="18.2" fill="#fff" stroke="#111" stroke-width="2.4"/><path d="M11 4.5 V17.5 M4.5 11 H17.5" stroke="#555" stroke-width="1" stroke-dasharray="1.4 1.2"/></svg>
<svg class="b" style="left:482.7px;top:184.55px;" width="10.6" height="7.9" viewBox="0 0 10.6 7.9"><path d="M2 2 L5.3 5.9 L8.6 2" fill="none" stroke="#484848" stroke-width="2.0" stroke-linecap="round" stroke-linejoin="round"/></svg>
<div class="b" style="left:506.6px;top:176px;width:1.8px;height:23.5px;background:#a6a6a6"></div>
<svg class="b" style="left:524px;top:176px;" width="24" height="18" viewBox="0 0 24 18"><path d="M9.4 3.2 L16.8 9.6 L10.4 15.8 L4 9.8 Z" fill="#fff" stroke="#3a3a3a" stroke-width="1.5" stroke-linejoin="round"/><path d="M8 6 Q8.4 0.8 12.4 2 Q13.8 2.8 13 6.6" fill="none" stroke="#3a3a3a" stroke-width="1.4"/><path d="M17.6 8 Q20.4 9.6 19.6 14" fill="none" stroke="#3a3a3a" stroke-width="1.4" stroke-linecap="round"/></svg>
<div class="b" style="left:524px;top:194.5px;width:22px;height:5px;background:#f3ec6c"></div>
<svg class="b" style="left:553.7px;top:184.55px;" width="10.6" height="7.9" viewBox="0 0 10.6 7.9"><path d="M2 2 L5.3 5.9 L8.6 2" fill="none" stroke="#484848" stroke-width="2.0" stroke-linecap="round" stroke-linejoin="round"/></svg>
<div class="t" style="left:578.80px;top:173.00px;font-size:19.5px;line-height:22px;color:#333;letter-spacing:0.000px;">A</div>
<div class="b" style="left:575px;top:194.5px;width:22px;height:5px;background:#d23f2f"></div>
<svg class="b" style="left:604.7px;top:184.55px;" width="10.6" height="7.9" viewBox="0 0 10.6 7.9"><path d="M2 2 L5.3 5.9 L8.6 2" fill="none" stroke="#484848" stroke-width="2.0" stroke-linecap="round" stroke-linejoin="round"/></svg>
<div class="b" style="left:676px;top:134px;width:19.5px;height:1.5px;background:#3a3a3a"></div>
<div class="b" style="left:679px;top:140px;width:13.5px;height:1.5px;background:#3a3a3a"></div>
<div class="b" style="left:676px;top:146px;width:19.5px;height:1.5px;background:#3a3a3a"></div>
<div class="b" style="left:711px;top:138px;width:19.5px;height:1.5px;background:#3a3a3a"></div>
<div class="b" style="left:714px;top:144px;width:13.5px;height:1.5px;background:#3a3a3a"></div>
<div class="b" style="left:711px;top:150px;width:19.5px;height:1.5px;background:#3a3a3a"></div>
<div class="b" style="left:740px;top:129.5px;width:32px;height:31.5px;background:linear-gradient(#c6c6c6,#bababa);border:1.5px solid #5e5e5e;border-radius:4.5px;box-sizing:border-box"></div>
<div class="b" style="left:749.5px;top:143px;width:12.5px;height:1.5px;background:#2a2a2a"></div>
<div class="b" style="left:746px;top:149px;width:19.5px;height:1.5px;background:#2a2a2a"></div>
<div class="b" style="left:746px;top:154px;width:19.5px;height:1.5px;background:#2a2a2a"></div>
<div class="b" style="left:782.1px;top:134px;width:1.8px;height:23px;background:#a6a6a6"></div>
<svg class="b" style="left:798px;top:132px;" width="28" height="26" viewBox="0 0 28 26"><g transform="rotate(-38 10 12)"><text x="1" y="15.5" font-family="Liberation Sans" font-size="13.5" fill="#4a4a4a">ab</text></g><path d="M8.6 23.6 L22.6 8.4 M16.6 7.8 L23.2 7.6 L22.8 14.2" fill="none" stroke="#3f7fd6" stroke-width="1.5" stroke-linecap="round" stroke-linejoin="round"/></svg>
<svg class="b" style="left:829.7px;top:141.55px;" width="10.6" height="7.9" viewBox="0 0 10.6 7.9"><path d="M2 2 L5.3 5.9 L8.6 2" fill="none" stroke="#484848" stroke-width="2.0" stroke-linecap="round" stroke-linejoin="round"/></svg>
<div class="b" style="left:676px;top:179px;width:19.5px;height:1.5px;background:#3a3a3a"></div>
<div class="b" style="left:676px;top:184px;width:13.0px;height:1.5px;background:#3a3a3a"></div>
<div class="b" style="left:676px;top:190px;width:19.5px;height:1.5px;background:#3a3a3a"></div>
<div class="b" style="left:676px;top:195px;width:13.0px;height:1.5px;background:#3a3a3a"></div>
<div class="b" style="left:711px;top:179px;width:19.5px;height:1.5px;background:#3a3a3a"></div>
<div class="b" style="left:714.2px;top:184px;width:13.099999999999909px;height:1.5px;background:#3a3a3a"></div>
<div class="b" style="left:711px;top:190px;width:19.5px;height:1.5px;background:#3a3a3a"></div>
<div class="b" style="left:714.2px;top:195px;width:13.099999999999909px;height:1.5px;background:#3a3a3a"></div>
<div class="b" style="left:746px;top:179px;width:19.5px;height:1.5px;background:#3a3a3a"></div>
<div class="b" style="left:752.5px;top:184px;width:13.0px;height:1.5px;background:#3a3a3a"></div>
<div class="b" style="left:746px;top:190px;width:19.5px;height:1.5px;background:#3a3a3a"></div>
<div class="b" style="left:752.5px;top:195px;width:13.0px;height:1.5px;background:#3a3a3a"></div>
<div class="b" style="left:782.1px;top:176px;width:1.8px;height:24px;background:#a6a6a6"></div>
<div class="b" style="left:801px;top:179px;width:19.5px;height:1.5px;background:#3a3a3a"></div>
<div class="b" style="left:812px;top:184px;width:8.5px;height:1.5px;background:#3a3a3a"></div>
<div class="b" style="left:812px;top:190px;width:8.5px;height:1.5px;background:#3a3a3a"></div>
<div class="b" style="left:801px;top:195px;width:19.5px;height:1.5px;background:#3a3a3a"></div>
<svg class="b" style="left:801px;top:182.5px;" width="11" height="10.5" viewBox="0 0 11 10.5"><path d="M9 5.2 H1.6 M4.6 2 L1.4 5.2 L4.6 8.4" fill="none" stroke="#3f7fd6" stroke-width="1.5" stroke-linecap="round" stroke-linejoin="round"/></svg>
<div class="b" style="left:836px;top:179px;width:19.5px;height:1.5px;background:#3a3a3a"></div>
<div class="b" style="left:847px;top:184px;width:8.5px;height:1.5px;background:#3a3a3a"></div>
<div class="b" style="left:847px;top:190px;width:8.5px;height:1.5px;background:#3a3a3a"></div>
<div class="b" style="left:836px;top:195px;width:19.5px;height:1.5px;background:#3a3a3a"></div>
<svg class="b" style="left:836px;top:182.5px;" width="11" height="10.5" viewBox="0 0 11 10.5"><path d="M1 5.2 H8.4 M5.4 2 L8.6 5.2 L5.4 8.4" fill="none" stroke="#3f7fd6" stroke-width="1.5" stroke-linecap="round" stroke-linejoin="round"/></svg>
<div class="b" style="left:885px;top:129.5px;width:122px;height:31.5px;background:linear-gradient(#c9c9c9,#bdbdbd);border:1.5px solid #5e5e5e;border-radius:4.5px;box-sizing:border-box"></div>
<div class="b" style="left:990.4px;top:131px;width:1.3px;height:28.5px;background:#8d8d8d"></div>
<div class="b" style="left:991.7px;top:131px;width:13.8px;height:28.5px;background:#dadada;border-radius:0 3px 3px 0"></div>
<svg class="b" style="left:892px;top:134px;" width="22" height="24" viewBox="0 0 22 24"><text x="1" y="10.6" font-family="Liberation Sans" font-size="12.5" fill="#444">ab</text><text x="1" y="21" font-family="Liberation Sans" font-size="12.5" fill="#444">c</text><path d="M17.6 11.6 Q20.4 15.8 17 18 L9.4 18 M12.4 15 L9.2 18 L12.4 21" fill="none" stroke="#3f7fd6" stroke-width="1.4" stroke-linecap="round" stroke-linejoin="round"/></svg>
<div class="t" style="left:920.50px;top:137.00px;font-size:15px;line-height:17px;color:#222;letter-spacing:-0.059px;-webkit-text-stroke:0.35px #222;">Wrap Text</div>
<svg class="b" style="left:993.7px;top:142.25px;" width="10.6" height="7.9" viewBox="0 0 10.6 7.9"><path d="M2 2 L5.3 5.9 L8.6 2" fill="none" stroke="#484848" stroke-width="2.0" stroke-linecap="round" stroke-linejoin="round"/></svg>
<svg class="b" style="left:889px;top:176.5px;" width="22" height="22" viewBox="0 0 22 22"><rect x="1.2" y="1.2" width="19.6" height="19.6" fill="#fff" stroke="#444" stroke-width="1.4"/><path d="M1.2 5.6 H20.8 M1.2 16.4 H20.8 M7.6 1.2 V5.6 M14.4 1.2 V5.6 M7.6 16.4 V20.8 M14.4 16.4 V20.8" stroke="#444" stroke-width="1.1"/><path d="M4 11 H18 M6.6 8.4 L4 11 L6.6 13.6 M15.4 8.4 L18 11 L15.4 13.6" fill="none" stroke="#3f7fd6" stroke-width="1.5" stroke-linecap="round" stroke-linejoin="round"/></svg>
<div class="t" style="left:920.50px;top:180.00px;font-size:15px;line-height:17px;color:#2a2a2a;letter-spacing:-0.068px;-webkit-text-stroke:0.42px #2a2a2a;">Merge &amp; Centre</div>
<svg class="b" style="left:1032.7px;top:184.55px;" width="10.6" height="7.9" viewBox="0 0 10.6 7.9"><path d="M2 2 L5.3 5.9 L8.6 2" fill="none" stroke="#484848" stroke-width="2.0" stroke-linecap="round" stroke-linejoin="round"/></svg>
<div class="b" style="left:1074px;top:129.5px;width:207px;height:31.5px;background:#fff;border:1.5px solid #b3b3b3;border-radius:5px;box-sizing:border-box;box-shadow:0 0.5px 0.5px rgba(0,0,0,.15)"></div>
<div class="b" style="left:1261.9px;top:131px;width:1.3px;height:28.5px;background:#bdbdbd"></div>
<div class="t" style="left:1082.00px;top:136.00px;font-size:17px;line-height:19px;color:#1d1d1d;letter-spacing:-0.413px;">General</div>
<svg class="b" style="left:1266.5px;top:142.25px;" width="10.6" height="7.9" viewBox="0 0 10.6 7.9"><path d="M2 2 L5.3 5.9 L8.6 2" fill="none" stroke="#484848" stroke-width="2.0" stroke-linecap="round" stroke-linejoin="round"/></svg>
<svg class="b" style="left:1077px;top:180px;" width="26" height="20" viewBox="0 0 26 20"><rect x="1.4" y="2" width="21" height="12.4" fill="#f5f5f5" stroke="#444" stroke-width="1.5"/><circle cx="12" cy="8.2" r="3.1" fill="none" stroke="#444" stroke-width="1.3"/><path d="M4.4 5v6.4M19.4 5v6.4" stroke="#444" stroke-width="1.1"/><ellipse cx="19" cy="11" rx="4.6" ry="2.1" fill="#fbe3cf" stroke="#e08a55" stroke-width="1.2"/><path d="M14.4 11 V16.4 Q14.4 18.6 19 18.6 Q23.6 18.6 23.6 16.4 V11 M14.4 13.8 Q14.6 15.8 19 15.8 Q23.4 15.8 23.6 13.8" fill="#fbe3cf" stroke="#e08a55" stroke-width="1.2"/></svg>
<svg class="b" style="left:1108.7px;top:184.55px;" width="10.6" height="7.9" viewBox="0 0 10.6 7.9"><path d="M2 2 L5.3 5.9 L8.6 2" fill="none" stroke="#484848" stroke-width="2.0" stroke-linecap="round" stroke-linejoin="round"/></svg>
<div class="t" style="left:1130.50px;top:174.00px;font-size:25px;line-height:28px;color:#3a3a3a;letter-spacing:0.000px;">%</div>
<svg class="b" style="left:1170px;top:179.5px;" width="12" height="18" viewBox="0 0 12 18"><path d="M5.8 1.4 Q10 1.4 10 6 Q10 12.4 3.4 16.2 L2.6 15 Q6.6 12 6.4 9.4 Q2 9.8 2 5.6 Q2 1.4 5.8 1.4 Z" fill="#222"/></svg>
<div class="b" style="left:1202.1px;top:176px;width:1.8px;height:24px;background:#a6a6a6"></div>
<svg class="b" style="left:1219px;top:176px;" width="24" height="24" viewBox="0 0 24 24"><path d="M10 7.4 H2 M5.2 4.2 L2 7.4 L5.2 10.6" fill="none" stroke="#3f7fd6" stroke-width="1.4" stroke-linecap="round" stroke-linejoin="round"/><text x="11.4" y="11.2" font-family="Liberation Sans" font-size="11.5" fill="#444">0</text><text x="2.4" y="21.8" font-family="Liberation Sans" font-size="11.5" fill="#444">.00</text></svg>
<svg class="b" style="left:1254px;top:176px;" width="24" height="24" viewBox="0 0 24 24"><text x="5" y="11.2" font-family="Liberation Sans" font-size="11.5" fill="#444">.00</text><path d="M2 17.6 H10 M6.8 14.4 L10 17.6 L6.8 20.8" fill="none" stroke="#3f7fd6" stroke-width="1.4" stroke-linecap="round" stroke-linejoin="round"/><text x="11" y="21.8" font-family="Liberation Sans" font-size="11.5" fill="#444">.0</text></svg>
<svg class="b" style="left:1324px;top:133px;" width="38" height="30" viewBox="0 0 38 30"><rect x="0.8" y="0.8" width="36.4" height="28.4" fill="#fff" stroke="#4a4a4a" stroke-width="1.5"/><rect x="7" y="1.4" width="17" height="8.6" fill="#e8575a"/><rect x="7" y="20" width="20" height="8.6" fill="#e8575a"/><rect x="7" y="10.4" width="11" height="9.2" fill="#4a90e2"/><path d="M7 0.8 V29.2 M29 0.8 V29.2 M0.8 10.0 H37.2 M0.8 20.0 H37.2" stroke="#4a4a4a" stroke-width="1.2" fill="none"/></svg>
<svg class="b" style="left:1369.3px;top:143.55px;" width="10.6" height="7.9" viewBox="0 0 10.6 7.9"><path d="M2 2 L5.3 5.9 L8.6 2" fill="none" stroke="#484848" stroke-width="2.0" stroke-linecap="round" stroke-linejoin="round"/></svg>
<div class="t" style="left:1313.00px;top:175.00px;font-size:14.7px;line-height:16px;color:#2a2a2a;letter-spacing:0.245px;-webkit-text-stroke:0.42px #2a2a2a;">Conditional</div>
<div class="t" style="left:1314.55px;top:191.00px;font-size:14.7px;line-height:16px;color:#2a2a2a;letter-spacing:0.360px;-webkit-text-stroke:0.42px #2a2a2a;">Formatting</div>
<svg class="b" style="left:1401px;top:133px;" width="44" height="38" viewBox="0 0 44 38"><rect x="0.8" y="0.8" width="36.4" height="28.4" fill="#fff" stroke="#4a4a4a" stroke-width="1.5"/><rect x="12.7" y="10" width="24.4" height="19" fill="#4a90e2"/><path d="M12.666666666666666 0.8 V29.2 M25.333333333333332 0.8 V29.2 M0.8 10.0 H37.2 M0.8 20.0 H37.2" stroke="#4a4a4a" stroke-width="1.2" fill="none"/><path d="M37.5 11 L25.5 26" stroke="#fff" stroke-width="5.4" stroke-linecap="round"/><path d="M37.5 11 L25.5 26" stroke="#4a4a4a" stroke-width="4.2" stroke-linecap="round"/><path d="M37.5 11 L25.5 26" stroke="#fafafa" stroke-width="1.9" stroke-linecap="round"/><path d="M24 26.5 q-3.6 0.2 -5 3.8 q-0.8 2.8 -5.2 3.4 q7.6 3.2 11.8 -1.2 q2.2 -2.8 0.4 -5 Z" fill="#5a96e0" stroke="#3a78c4" stroke-width="0.9"/></svg>
<svg class="b" style="left:1447.2px;top:143.55px;" width="10.6" height="7.9" viewBox="0 0 10.6 7.9"><path d="M2 2 L5.3 5.9 L8.6 2" fill="none" stroke="#484848" stroke-width="2.0" stroke-linecap="round" stroke-linejoin="round"/></svg>
<div class="t" style="left:1403.95px;top:175.00px;font-size:14.7px;line-height:16px;color:#2a2a2a;letter-spacing:-0.011px;-webkit-text-stroke:0.42px #2a2a2a;">Format</div>
<div class="t" style="left:1399.95px;top:191.00px;font-size:14.7px;line-height:16px;color:#2a2a2a;letter-spacing:0.002px;-webkit-text-stroke:0.42px #2a2a2a;">as Table</div>
<svg class="b" style="left:1468px;top:133px;" width="44" height="38" viewBox="0 0 44 38"><rect x="0.8" y="0.8" width="36.4" height="28.4" fill="#fff" stroke="#4a4a4a" stroke-width="1.5"/><rect x="7" y="6.4" width="23" height="16" fill="#4a90e2"/><path d="M7 0.8 V29.2 M31 0.8 V29.2 M0.8 6 H37.2 M0.8 23 H37.2" stroke="#4a4a4a" stroke-width="1.2" fill="none"/><path d="M38.5 11 L26.5 26" stroke="#fff" stroke-width="5.4" stroke-linecap="round"/><path d="M38.5 11 L26.5 26" stroke="#4a4a4a" stroke-width="4.2" stroke-linecap="round"/><path d="M38.5 11 L26.5 26" stroke="#fafafa" stroke-width="1.9" stroke-linecap="round"/><path d="M25 26.5 q-3.6 0.2 -5 3.8 q-0.8 2.8 -5.2 3.4 q7.6 3.2 11.8 -1.2 q2.2 -2.8 0.4 -5 Z" fill="#5a96e0" stroke="#3a78c4" stroke-width="0.9"/></svg>
<svg class="b" style="left:1514.5px;top:143.55px;" width="10.6" height="7.9" viewBox="0 0 10.6 7.9"><path d="M2 2 L5.3 5.9 L8.6 2" fill="none" stroke="#484848" stroke-width="2.0" stroke-linecap="round" stroke-linejoin="round"/></svg>
<div class="t" style="left:1481.00px;top:175.00px;font-size:14.7px;line-height:16px;color:#2a2a2a;letter-spacing:0.226px;-webkit-text-stroke:0.42px #2a2a2a;">Cell</div>
<div class="t" style="left:1473.95px;top:191.00px;font-size:14.7px;line-height:16px;color:#2a2a2a;letter-spacing:0.094px;-webkit-text-stroke:0.42px #2a2a2a;">Styles</div>
<svg class="b" style="left:1557px;top:133px;" width="44" height="30" viewBox="0 0 44 30"><g transform="translate(5,0)"><rect x="0.8" y="0.8" width="36.4" height="28.4" fill="#fff" stroke="#4a4a4a" stroke-width="1.5"/><rect x="9" y="10.4" width="28" height="9.2" fill="#4a90e2"/><path d="M12.666666666666666 0.8 V29.2 M25.333333333333332 0.8 V29.2 M0.8 10.0 H37.2 M0.8 20.0 H37.2" stroke="#4a4a4a" stroke-width="1.2" fill="none"/></g><path d="M22 15 H4 M9.4 9 L3 15 L9.4 21" fill="none" stroke="#fff" stroke-width="5.4"/><path d="M21 12.6 H9.4 V9 L2.6 15 L9.4 21 V17.4 H21 Z" fill="#fff" stroke="#4a90e2" stroke-width="1.4" stroke-linejoin="round"/></svg>
<svg class="b" style="left:1606.7px;top:143.55px;" width="10.6" height="7.9" viewBox="0 0 10.6 7.9"><path d="M2 2 L5.3 5.9 L8.6 2" fill="none" stroke="#484848" stroke-width="2.0" stroke-linecap="round" stroke-linejoin="round"/></svg>
<div class="t" style="left:1568.05px;top:175.00px;font-size:14.7px;line-height:16px;color:#2a2a2a;letter-spacing:0.147px;-webkit-text-stroke:0.42px #2a2a2a;">Insert</div>
<svg class="b" style="left:1628px;top:133px;" width="44" height="30" viewBox="0 0 44 30"><rect x="0.8" y="0.8" width="36.4" height="28.4" fill="#fff" stroke="#4a4a4a" stroke-width="1.5"/><rect x="5" y="10.4" width="16" height="9.2" fill="#4a90e2"/><path d="M21 10.4 L25.6 15 L21 19.6 Z" fill="#4a90e2"/><rect x="24.5" y="6" width="15" height="18" fill="#f1f1f1"/><path d="M12.666666666666666 0.8 V29.2 M25.333333333333332 0.8 V29.2 M0.8 10.0 H37.2 M0.8 20.0 H37.2" stroke="#4a4a4a" stroke-width="1.2" fill="none"/><path d="M25.4 7.6 L38.4 22.4 M38.4 7.6 L25.4 22.4" stroke="#e8575a" stroke-width="1.7" stroke-linecap="round"/></svg>
<svg class="b" style="left:1673.7px;top:143.55px;" width="10.6" height="7.9" viewBox="0 0 10.6 7.9"><path d="M2 2 L5.3 5.9 L8.6 2" fill="none" stroke="#484848" stroke-width="2.0" stroke-linecap="round" stroke-linejoin="round"/></svg>
<div class="t" style="left:1632.55px;top:175.00px;font-size:14.7px;line-height:16px;color:#2a2a2a;letter-spacing:0.002px;-webkit-text-stroke:0.42px #2a2a2a;">Delete</div>
<svg class="b" style="left:1695px;top:125px;" width="40" height="38" viewBox="0 0 40 38"><path d="M9.4 2.6 V6.2 M28.6 2.6 V6.2 M9.4 4.4 H28.6" stroke="#4a4a4a" stroke-width="1.2" fill="none"/><g transform="translate(0,8)"><rect x="0.8" y="0.8" width="36.4" height="28.4" fill="#fff" stroke="#4a4a4a" stroke-width="1.5"/><rect x="10.4" y="10.4" width="16.6" height="9.2" fill="#4a90e2"/><path d="M9.6 0.8 V29.2 M28.4 0.8 V29.2 M0.8 10.0 H37.2 M0.8 20.0 H37.2" stroke="#4a4a4a" stroke-width="1.2" fill="none"/></g></svg>
<svg class="b" style="left:1740.2px;top:143.55px;" width="10.6" height="7.9" viewBox="0 0 10.6 7.9"><path d="M2 2 L5.3 5.9 L8.6 2" fill="none" stroke="#484848" stroke-width="2.0" stroke-linecap="round" stroke-linejoin="round"/></svg>
<div class="t" style="left:1699.00px;top:175.00px;font-size:14.7px;line-height:16px;color:#2a2a2a;letter-spacing:-0.111px;-webkit-text-stroke:0.42px #2a2a2a;">Format</div>
<svg class="b" style="left:1788px;top:127px;" width="20" height="21" viewBox="0 0 20 21"><path d="M17.4 5 V2 H2.6 L10.6 10.4 L2.6 19 H17.4 V16" fill="none" stroke="#3a3a3a" stroke-width="1.6" stroke-linejoin="round" stroke-linecap="round"/></svg>
<div class="t" style="left:1817.00px;top:130.00px;font-size:14.7px;line-height:16px;color:#2a2a2a;letter-spacing:0.299px;-webkit-text-stroke:0.42px #2a2a2a;">Auto-sum</div>
<svg class="b" style="left:1890.2px;top:133.65px;" width="10.6" height="7.9" viewBox="0 0 10.6 7.9"><path d="M2 2 L5.3 5.9 L8.6 2" fill="none" stroke="#484848" stroke-width="2.0" stroke-linecap="round" stroke-linejoin="round"/></svg>
<svg class="b" style="left:1786px;top:156.5px;" width="24" height="20" viewBox="0 0 24 20"><rect x="1.4" y="1.4" width="20.4" height="17.4" fill="#fff" stroke="#3a3a3a" stroke-width="1.5"/><path d="M1.4 4.6 H21.8" stroke="#3a3a3a" stroke-width="1.2"/><path d="M11.6 7 V15.4 M8 12 L11.6 15.6 L15.2 12" fill="none" stroke="#3f7fd6" stroke-width="1.5" stroke-linecap="round" stroke-linejoin="round"/></svg>
<div class="t" style="left:1817.00px;top:159.00px;font-size:14.7px;line-height:16px;color:#2a2a2a;letter-spacing:-0.259px;-webkit-text-stroke:0.42px #2a2a2a;">Fill</div>
<svg class="b" style="left:1842.7px;top:163.05px;" width="10.6" height="7.9" viewBox="0 0 10.6 7.9"><path d="M2 2 L5.3 5.9 L8.6 2" fill="none" stroke="#484848" stroke-width="2.0" stroke-linecap="round" stroke-linejoin="round"/></svg>
<svg class="b" style="left:1786px;top:185px;" width="24" height="22" viewBox="0 0 24 22"><path d="M13.4 2 L20.6 9 L9.6 20 L2.4 13 Z" fill="#fff" stroke="#444" stroke-width="1.4" stroke-linejoin="round"/><path d="M7 8.4 L14.2 15.4 L9.6 20 L2.4 13 Z" fill="#a46bd0" stroke="#8a4fbd" stroke-width="1" stroke-linejoin="round"/></svg>
<div class="t" style="left:1817.00px;top:189.00px;font-size:14.7px;line-height:16px;color:#2a2a2a;letter-spacing:-0.282px;-webkit-text-stroke:0.42px #2a2a2a;">Clear</div>
<svg class="b" style="left:1858.7px;top:192.45000000000002px;" width="10.6" height="7.9" viewBox="0 0 10.6 7.9"><path d="M2 2 L5.3 5.9 L8.6 2" fill="none" stroke="#484848" stroke-width="2.0" stroke-linecap="round" stroke-linejoin="round"/></svg>
<div class="t" style="left:1910.50px;top:127.00px;font-size:19.5px;line-height:22px;color:#4a86d8;letter-spacing:0.000px;">A</div>
<div class="t" style="left:1911.50px;top:146.00px;font-size:20.5px;line-height:23px;color:#333;letter-spacing:0.000px;">Z</div>
<svg class="b" style="left:1926px;top:137px;" width="25" height="24" viewBox="0 0 25 24"><path d="M1.6 1.8 H23 L15 11.4 V21.4 H9.8 V11.4 Z" fill="#f6f6f6" stroke="#3a3a3a" stroke-width="1.7" stroke-linejoin="round"/></svg>
<svg class="b" style="left:1956.7px;top:144.05px;" width="10.6" height="7.9" viewBox="0 0 10.6 7.9"><path d="M2 2 L5.3 5.9 L8.6 2" fill="none" stroke="#484848" stroke-width="2.0" stroke-linecap="round" stroke-linejoin="round"/></svg>
<div class="t" style="left:1917.00px;top:175.00px;font-size:14.7px;line-height:16px;color:#2a2a2a;letter-spacing:0.030px;-webkit-text-stroke:0.42px #2a2a2a;">Sort &amp;</div>
<div class="t" style="left:1920.50px;top:191.00px;font-size:14.7px;line-height:16px;color:#2a2a2a;letter-spacing:0.267px;-webkit-text-stroke:0.42px #2a2a2a;">Filter</div>
<svg class="b" style="left:1975px;top:127px;" width="44" height="44" viewBox="0 0 44 44"><circle cx="27" cy="16" r="13.2" fill="none" stroke="#3a3a3a" stroke-width="1.6"/><path d="M17.6 25.6 L3 40" stroke="#3a3a3a" stroke-width="1.6" stroke-linecap="round"/></svg>
<svg class="b" style="left:2024.5px;top:144.05px;" width="10.6" height="7.9" viewBox="0 0 10.6 7.9"><path d="M2 2 L5.3 5.9 L8.6 2" fill="none" stroke="#484848" stroke-width="2.0" stroke-linecap="round" stroke-linejoin="round"/></svg>
<div class="t" style="left:1983.00px;top:175.00px;font-size:14.7px;line-height:16px;color:#2a2a2a;letter-spacing:-0.097px;-webkit-text-stroke:0.42px #2a2a2a;">Find &amp;</div>
<div class="t" style="left:1983.00px;top:191.00px;font-size:14.7px;line-height:16px;color:#2a2a2a;letter-spacing:0.229px;-webkit-text-stroke:0.42px #2a2a2a;">Select</div>
<div class="b" style="left:154px;top:219.5px;width:111px;height:31px;background:#fff;border:1.4px solid #b0b0b0;border-top-color:#7a7a7a;border-radius:3.5px;box-sizing:border-box;box-shadow:0 1px 1px rgba(0,0,0,.18)"></div>
<div class="b" style="left:243.5px;top:221.5px;width:1.2px;height:27.5px;background:#c6c6c6"></div>
<div class="t" style="left:165.50px;top:226.00px;font-size:15.6px;line-height:17px;color:#222;letter-spacing:0.558px;-webkit-text-stroke:0.3px #222;">D5</div>
<svg class="b" style="left:249px;top:223.5px;" width="12" height="24" viewBox="0 0 12 24"><path d="M1.4 7.4 L5.8 1 L10.2 7.4 Z" fill="#6e6e6e"/><path d="M1.4 16 L5.8 22.4 L10.2 16 Z" fill="#6e6e6e"/></svg>
<svg class="b" style="left:285px;top:228px;" width="18" height="16" viewBox="0 0 18 16"><path d="M2 1.6 L15.6 14.4 M15.6 1.6 L2 14.4" stroke="#c9c9c9" stroke-width="2" stroke-linecap="round"/></svg>
<svg class="b" style="left:323px;top:228px;" width="22" height="16" viewBox="0 0 22 16"><path d="M2 8.6 L8 14 L19 1.8" fill="none" stroke="#c9c9c9" stroke-width="2.2" stroke-linecap="round" stroke-linejoin="round"/></svg>
<div class="t" style="left:365px;top:219.5px;font-family:'Liberation Serif',serif;font-style:italic;font-size:23.5px;line-height:27px;color:#444;letter-spacing:-1px;-webkit-text-stroke:0.35px #444">fx</div>
<div class="b" style="left:394px;top:225px;width:1px;height:21px;background:#e0e0e0"></div>
<div class="t" style="left:405.00px;top:227.00px;font-size:16.4px;line-height:18px;color:#1c1c1c;letter-spacing:0.244px;-webkit-text-stroke:0.25px #1c1c1c;">'- More noise as compared to positional</div>
<svg class="b" style="left:2073px;top:231.5px;" width="10" height="8" viewBox="0 0 10 8"><path d="M0.6 0.8 H9.4 L5 7.4 Z" fill="#6a6a6a"/></svg>
<div class="b" style="left:152px;top:1062px;width:1936px;height:35px;background:linear-gradient(#f1f1f1,#e9e9e9)"></div>
<div class="b" style="left:152px;top:1062px;width:1936px;height:1px;background:#cfcfcf"></div>
<div class="b" style="left:152px;top:1096.5px;width:1936px;height:1.5px;background:#bdbdbd"></div>
<svg class="b" style="left:171px;top:1073px;" width="12" height="15" viewBox="0 0 12 15"><path d="M10.6 1 V14 L1.2 7.5 Z" fill="#474747"/></svg>
<svg class="b" style="left:202px;top:1073px;" width="12" height="15" viewBox="0 0 12 15"><path d="M1.4 1 V14 L10.8 7.5 Z" fill="#b4b4b4"/></svg>
<div class="t" style="left:258.75px;top:1070.00px;font-size:16.4px;line-height:18px;color:#7a7a7a;letter-spacing:0.176px;-webkit-text-stroke:0.25px #7a7a7a;">Counting bases</div>
<div class="t" style="left:427.00px;top:1070.00px;font-size:16.4px;line-height:18px;color:#7a7a7a;letter-spacing:0.130px;-webkit-text-stroke:0.25px #7a7a7a;">Tradingview premium</div>
<div class="t" style="left:635.50px;top:1070.00px;font-size:16.4px;line-height:18px;color:#7a7a7a;letter-spacing:0.348px;-webkit-text-stroke:0.25px #7a7a7a;">Psychology</div>
<div class="t" style="left:772.50px;top:1070.00px;font-size:16.4px;line-height:18px;color:#7a7a7a;letter-spacing:-0.296px;-webkit-text-stroke:0.25px #7a7a7a;">Sheet1</div>
<div class="t" style="left:876.50px;top:1070.00px;font-size:16.4px;line-height:18px;color:#7a7a7a;letter-spacing:0.283px;-webkit-text-stroke:0.25px #7a7a7a;">Averagind down</div>
<div class="t" style="left:1047.50px;top:1070.00px;font-size:16.4px;line-height:18px;color:#7a7a7a;letter-spacing:0.242px;-webkit-text-stroke:0.25px #7a7a7a;">Asset allocation</div>
<div class="t" style="left:1217.50px;top:1070.00px;font-size:16.4px;line-height:18px;color:#7a7a7a;letter-spacing:0.211px;-webkit-text-stroke:0.25px #7a7a7a;">Key to making money</div>
<div class="t" style="left:1428.50px;top:1070.00px;font-size:16.4px;line-height:18px;color:#7a7a7a;letter-spacing:0.016px;-webkit-text-stroke:0.25px #7a7a7a;">Leverage</div>
<div class="t" style="left:1720.50px;top:1070.00px;font-size:16.4px;line-height:18px;color:#7a7a7a;letter-spacing:-0.096px;-webkit-text-stroke:0.25px #7a7a7a;">Sheet6</div>
<div class="b" style="left:256px;top:1068px;width:12px;height:24px;background:linear-gradient(90deg,rgba(238,238,238,.85),rgba(238,238,238,0))"></div>
<div class="b" style="left:232.5px;top:1066px;width:1.2px;height:27px;background:#d2d2d2"></div>
<div class="b" style="left:399.5px;top:1066px;width:1.2px;height:27px;background:#d2d2d2"></div>
<div class="b" style="left:611.5px;top:1066px;width:1.2px;height:27px;background:#d2d2d2"></div>
<div class="b" style="left:745.0px;top:1066px;width:1.2px;height:27px;background:#d2d2d2"></div>
<div class="b" style="left:851.5px;top:1066px;width:1.2px;height:27px;background:#d2d2d2"></div>
<div class="b" style="left:1022.0px;top:1066px;width:1.2px;height:27px;background:#d2d2d2"></div>
<div class="b" style="left:1190.0px;top:1066px;width:1.2px;height:27px;background:#d2d2d2"></div>
<div class="b" style="left:1405.0px;top:1066px;width:1.2px;height:27px;background:#d2d2d2"></div>
<div class="b" style="left:1799.5px;top:1066px;width:1.2px;height:27px;background:#d2d2d2"></div>
<div class="b" style="left:1850.0px;top:1066px;width:1.2px;height:27px;background:#d2d2d2"></div>
<div class="b" style="left:1520.5px;top:1062px;width:173px;height:30.5px;background:#fff;border:1px solid #c4c4c4;border-top:none;border-radius:0 0 4px 4px;box-sizing:border-box;box-shadow:0 1px 1.5px rgba(0,0,0,.25)"></div>
<div class="t" style="left:1545.00px;top:1070.00px;font-size:16.4px;line-height:18px;color:#3a8055;letter-spacing:0.421px;-webkit-text-stroke:0.35px #3a8055;">Types of trading</div>
<svg class="b" style="left:1818px;top:1071px;" width="16" height="16" viewBox="0 0 16 16"><path d="M8 1.6 V14.4 M1.6 8 H14.4" stroke="#3e3e3e" stroke-width="2"/></svg>
<div class="b" style="left:152px;top:1098px;width:1936px;height:30px;background:linear-gradient(#eaeaea,#d3d3d3)"></div>
<div class="t" style="left:185.00px;top:1105.00px;font-size:15.5px;line-height:17px;color:#6a6a6a;letter-spacing:0.299px;">Ready</div>
<div class="b" style="left:1657.5px;top:1098px;width:50px;height:30px;background:#3b3b3b"></div>
<svg class="b" style="left:1673px;top:1103px;" width="20" height="20" viewBox="0 0 20 20"><rect x="1.4" y="1.4" width="16.4" height="16.4" fill="none" stroke="#f3f3f3" stroke-width="1.6"/><path d="M6.9 1.4 V17.8 M12.3 1.4 V17.8 M1.4 6.9 H17.8 M1.4 12.3 H17.8" stroke="#f3f3f3" stroke-width="1.4"/></svg>
<svg class="b" style="left:1720px;top:1103px;" width="22" height="20" viewBox="0 0 22 20"><rect x="1.2" y="1.4" width="18.8" height="16.6" fill="none" stroke="#555" stroke-width="1.4"/><rect x="5" y="4.6" width="11.2" height="10.4" fill="none" stroke="#555" stroke-width="1.2"/><path d="M7 7.6 H14.2 M7 9.8 H14.2 M7 12 H14.2" stroke="#555" stroke-width="1"/></svg>
<svg class="b" style="left:1768px;top:1103px;" width="22" height="20" viewBox="0 0 22 20"><rect x="1.2" y="1.4" width="17.6" height="16.6" fill="none" stroke="#555" stroke-width="1.5"/><path d="M7.4 1.4 V9.4 M12.8 1.4 V9.4 M1.2 9.4 H18.8" stroke="#555" stroke-width="1.4" fill="none"/></svg>
<div class="b" style="left:1813.5px;top:1111.8px;width:10.5px;height:2px;background:#555"></div>
<div class="b" style="left:1834px;top:1111px;width:134px;height:3.6px;background:#505050;border-radius:2px"></div>
<div class="b" style="left:1901px;top:1101.5px;width:22px;height:22px;border-radius:50%;background:linear-gradient(#ffffff,#ededed);border:1px solid #9a9a9a;box-sizing:border-box;box-shadow:0 1px 1.5px rgba(0,0,0,.35)"></div>
<svg class="b" style="left:1976px;top:1106px;" width="14" height="14" viewBox="0 0 14 14"><path d="M7 1.4 V12.6 M1.4 7 H12.6" stroke="#3e3e3e" stroke-width="2"/></svg>
<div class="t" style="left:2012.00px;top:1105.00px;font-size:16px;line-height:17px;color:#7a7a7a;letter-spacing:0.359px;">163%</div>
</div></div>
<svg class="b" style="left:178px;top:3px;" width="20" height="24" viewBox="0 0 20 24"><path d="M13.2 1.2 C13.4 3.2 11.6 5.6 9.4 5.5 C9.1 3.5 11.1 1.4 13.2 1.2 Z M16.9 8.4 C15.4 9.3 14.6 10.6 14.6 12.3 C14.7 14.4 15.9 15.8 17.7 16.5 C17.2 18 16.4 19.4 15.3 20.6 C14.4 21.6 13.5 22.1 12.5 22.1 C11.3 22.1 10.8 21.4 9.5 21.4 C8.1 21.4 7.6 22.1 6.5 22.1 C5.5 22.2 4.6 21.5 3.6 20.4 C1.6 18 0.5 14.4 1.3 11.4 C2 8.6 4.2 6.7 6.6 6.7 C7.9 6.7 8.9 7.5 9.8 7.5 C10.6 7.5 12 6.5 13.6 6.6 C14.9 6.7 16.1 7.3 16.9 8.4 Z" fill="#111"/></svg>
<div class="t" style="left:224.00px;top:6.00px;font-size:17.5px;line-height:20px;font-weight:bold;color:#1c1c1c;letter-spacing:-0.058px;">Excel</div>
<div class="t" style="left:298.00px;top:6.00px;font-size:17.5px;line-height:20px;color:#1c1c1c;letter-spacing:-0.233px;">File</div>
<div class="t" style="left:354.50px;top:6.00px;font-size:17.5px;line-height:20px;color:#1c1c1c;letter-spacing:0.115px;">Edit</div>
<div class="t" style="left:413.75px;top:6.00px;font-size:17.5px;line-height:20px;color:#1c1c1c;letter-spacing:0.212px;">View</div>
<div class="t" style="left:480.50px;top:6.00px;font-size:17.5px;line-height:20px;color:#1c1c1c;letter-spacing:0.347px;">Insert</div>
<div class="t" style="left:554.50px;top:6.00px;font-size:17.5px;line-height:20px;color:#1c1c1c;letter-spacing:0.215px;">Format</div>
<div class="t" style="left:640.00px;top:6.00px;font-size:17.5px;line-height:20px;color:#1c1c1c;letter-spacing:0.287px;">Tools</div>
<div class="t" style="left:710.50px;top:6.00px;font-size:17.5px;line-height:20px;color:#1c1c1c;letter-spacing:0.178px;">Data</div>
<div class="t" style="left:777.00px;top:6.00px;font-size:17.5px;line-height:20px;color:#1c1c1c;letter-spacing:0.302px;">Window</div>
<div class="t" style="left:869.25px;top:6.00px;font-size:17.5px;line-height:20px;color:#1c1c1c;letter-spacing:0.086px;">Help</div>
<div class="t" style="left:1888.00px;top:6.00px;font-size:17.5px;line-height:20px;color:#1c1c1c;letter-spacing:0.278px;">Sun 31 Jul</div>
<div class="t" style="left:1985.40px;top:6.00px;font-size:17.5px;line-height:20px;color:#1c1c1c;letter-spacing:0.385px;">12:04 PM</div>
<svg class="b" style="left:1563px;top:4px;" width="26" height="24" viewBox="0 0 26 24"><rect x="1.4" y="1.6" width="11.4" height="11.4" rx="2" fill="#7fd07a"/><path d="M3.6 7.4 L6.2 10 L10.6 4.6" fill="none" stroke="#f4fff4" stroke-width="1.7"/><path d="M3.4 11.4 L9 11.4 L9 3.6 L14 3.6 L12.4 10.2 L17.4 3.6 L24 3.6 L16.4 12.4 L22.6 22.4 L16 22.4 L12 15.6 L10.6 22.4 L3.4 22.4 Z" fill="#111"/></svg>
<svg class="b" style="left:1610px;top:7px;" width="38" height="18" viewBox="0 0 38 18"><rect x="1.5" y="1.5" width="30" height="15" rx="4.2" fill="none" stroke="#6a6a6a" stroke-width="1.5"/><rect x="4" y="4" width="21.5" height="10" rx="2.4" fill="#111"/><path d="M33.6 6.2 Q35.6 7 35.6 9 Q35.6 11 33.6 11.8 Z" fill="#8a8a8a"/></svg>
<svg class="b" style="left:1668px;top:5px;" width="22" height="22" viewBox="0 0 22 22"><circle cx="11" cy="11" r="9.3" fill="none" stroke="#333" stroke-width="1.5"/><circle cx="11" cy="11" r="6.2" fill="none" stroke="#333" stroke-width="1.5"/><circle cx="11" cy="11" r="3.1" fill="none" stroke="#333" stroke-width="1.5"/><path d="M5 21.6 L11 13.2 L17 21.6 Z" fill="#e8e8e8"/><path d="M7.6 21 L11 15.8 L14.4 21 Z" fill="#333"/></svg>
<svg class="b" style="left:1715px;top:7px;" width="22.6" height="17.4" viewBox="0 0 26 20"><path d="M2 7.2 Q13 -2.6 24 7.2" fill="none" stroke="#111" stroke-width="2.6" stroke-linecap="round"/><path d="M6 11.4 Q13 5 20 11.4" fill="none" stroke="#111" stroke-width="2.6" stroke-linecap="round"/><path d="M10 15.2 Q13 12.6 16 15.2" fill="none" stroke="#111" stroke-width="2.6" stroke-linecap="round"/><circle cx="13" cy="17.4" r="1.7" fill="#111"/></svg>
<svg class="b" style="left:1761px;top:6px;" width="22" height="22" viewBox="0 0 22 22"><circle cx="9" cy="9" r="6.4" fill="none" stroke="#111" stroke-width="2"/><path d="M13.6 13.8 L19 19.4" stroke="#111" stroke-width="2.4" stroke-linecap="round"/></svg>
<svg class="b" style="left:1797px;top:6px;" width="24" height="22" viewBox="0 0 24 22"><rect x="1.2" y="1.4" width="19.6" height="7.6" rx="3.8" fill="none" stroke="#111" stroke-width="1.6"/><circle cx="5.4" cy="5.2" r="2.3" fill="#111"/><rect x="1.2" y="11.6" width="19.6" height="7.6" rx="3.8" fill="#111"/><circle cx="16.6" cy="15.4" r="2.2" fill="#e8e8e8"/></svg>
<svg class="b" style="left:1824px;top:13px;" width="8" height="8" viewBox="0 0 8 8"><circle cx="4" cy="4" r="3" fill="#f0a63a"/></svg>
<div class="b" style="left:1847.5px;top:6.5px;width:19px;height:19px;border-radius:50%;background:radial-gradient(circle at 52% 50%,#ffffff 0,#e6f0fa 14%,rgba(200,225,245,.55) 32%,rgba(255,255,255,0) 52%),conic-gradient(from 210deg,#b9504c,#8d6aa8,#3d78c2,#2f8fb2,#47a08c,#6f7f9a,#b9504c);box-shadow:0 0 0 0.8px #77829a"></div>
<div class="b" style="left:222px;top:1129.5px;width:1795px;height:27.5px;overflow:hidden;border-radius:13px 13px 0 0;background:#c5c5c5;box-shadow:inset 0 1px 0 #dcdcdc">
<div class="b" style="left:11.0px;top:10.5px;width:47px;height:47px;border-radius:11px;background:linear-gradient(90deg,#4aa3ea 0,#4aa3ea 50%,#f0f0f0 50%);overflow:hidden"><div style="position:absolute;left:20px;top:-4px;width:14px;height:40px;background:#f0f0f0;transform:skewX(-14deg)"></div><div style="position:absolute;left:12px;top:12px;width:2px;height:6px;background:#223"></div><div style="position:absolute;left:33px;top:12px;width:2px;height:6px;background:#223"></div></div>
<div class="b" style="left:73.0px;top:10.5px;width:47px;height:47px;border-radius:11px;background:#e9e9ea;overflow:hidden"><div style="position:absolute;left:7px;top:9px;width:9px;height:9px;border-radius:2px;background:#62d26a"></div><div style="position:absolute;left:19px;top:9px;width:9px;height:9px;border-radius:2px;background:#f5b544"></div><div style="position:absolute;left:31px;top:9px;width:9px;height:9px;border-radius:2px;background:#f07a3c"></div></div>
<div class="b" style="left:135.0px;top:10.5px;width:47px;height:47px;border-radius:11px;background:#f4f4f4;overflow:hidden"><div style="position:absolute;left:4px;top:4px;width:39px;height:39px;border-radius:50%;background:#4b97e2"></div><div style="position:absolute;left:31px;top:9px;width:2px;height:12px;background:#c55;transform:rotate(40deg)"></div></div>
<div class="b" style="left:197.0px;top:10.5px;width:47px;height:47px;border-radius:11px;background:#6fdd6a;overflow:hidden"><div style="position:absolute;left:10px;top:11px;width:27px;height:24px;border-radius:50%;background:#fff"></div></div>
<div class="b" style="left:259.0px;top:10.5px;width:47px;height:47px;border-radius:11px;background:linear-gradient(90deg,#eef1ec 0,#eef1ec 18%,#8fd48a 18%,#8fd48a 28%,#3d7be6 28%,#3d7be6 40%,#7fd07a 40%,#7fd07a 62%,#dfe3dc 62%,#dfe3dc 70%,#86d681 70%,#bfe8bb 100%);overflow:hidden"><div style="position:absolute;left:29px;top:-14px;width:30px;height:30px;border-radius:50%;border:3px solid #e6e6e6"></div></div>
<div class="b" style="left:321.0px;top:10.5px;width:47px;height:47px;border-radius:11px;background:#3a7fe8;overflow:hidden"><div style="position:absolute;left:9px;top:14px;width:29px;height:30px;border-radius:3px 3px 0 0;background:#f2f5fb"></div></div>
<div class="b" style="left:383.0px;top:10.5px;width:47px;height:47px;border-radius:11px;background:#f3f3f3;overflow:hidden"><div style="position:absolute;left:9px;top:7px;width:14px;height:14px;border-radius:50%;background:#e9574a"></div><div style="position:absolute;left:19px;top:3px;width:14px;height:14px;border-radius:50%;background:#f0a945"></div><div style="position:absolute;left:28px;top:8px;width:13px;height:13px;border-radius:50%;background:#f2cf48"></div></div>
<div class="b" style="left:445.0px;top:10.5px;width:47px;height:47px;border-radius:11px;background:#6edc69;overflow:hidden"><div style="position:absolute;left:9px;top:14px;width:22px;height:20px;border-radius:4px;background:#8fe88a"></div></div>
<div class="b" style="left:507.0px;top:10.5px;width:47px;height:47px;border-radius:11px;background:#f4f4f4;overflow:hidden"><div style="position:absolute;left:0;top:0;width:47px;height:14px;background:#e5534b"></div><div style="position:absolute;left:14px;top:1.5px;font:bold 7.5px 'Liberation Sans',sans-serif;color:#fff;letter-spacing:.3px">JUL</div></div>
<div class="b" style="left:567.0px;top:10.5px;width:47px;height:47px;border-radius:11px;background:#a47a4b;overflow:hidden"></div>
<div class="b" style="left:630.0px;top:10.5px;width:47px;height:47px;border-radius:11px;background:#f6f6f6;overflow:hidden"><div style="position:absolute;left:8px;top:7px;width:6px;height:6px;border-radius:50%;background:#4a8be8"></div><div style="position:absolute;left:18px;top:9px;width:22px;height:2px;background:#d8d8d8"></div></div>
<div class="b" style="left:692.0px;top:10.5px;width:47px;height:47px;border-radius:11px;background:#f4f4f4;overflow:hidden"><div style="position:absolute;left:5px;top:4px;width:37px;height:37px;border-radius:50%;background:conic-gradient(from -60deg,#e5493a 0 120deg,#f4c33a 120deg 240deg,#4aa75a 240deg 360deg)"></div><div style="position:absolute;left:15px;top:14px;width:17px;height:17px;border-radius:50%;background:#4a86e8;border:2px solid #fff;box-sizing:border-box"></div></div>
<div class="b" style="left:753.0px;top:10.5px;width:47px;height:47px;border-radius:11px;background:#f8f4e6;overflow:hidden"><div style="position:absolute;left:0;top:0;width:47px;height:12px;background:#f5cf4f"></div></div>
<div class="b" style="left:815.0px;top:10.5px;width:47px;height:47px;border-radius:11px;background:#2b2b2d;overflow:hidden"><div style="position:absolute;left:19px;top:11px;width:2px;height:2px;background:#ddd"></div></div>
<div class="b" style="left:877.0px;top:10.5px;width:47px;height:47px;border-radius:11px;background:#ee5466;overflow:hidden"><div style="position:absolute;left:22px;top:8px;width:12px;height:6px;background:#fbe9ec"></div></div>
<div class="b" style="left:939.5px;top:10.5px;width:47px;height:47px;border-radius:11px;background:#a356d8;overflow:hidden"><div style="position:absolute;left:10px;top:7px;width:27px;height:27px;border-radius:50%;border:2.5px solid #e3c5f5;box-sizing:border-box"></div><div style="position:absolute;left:16px;top:13px;width:15px;height:15px;border-radius:50%;border:2px solid #e3c5f5;box-sizing:border-box"></div></div>
<div class="b" style="left:1000.5px;top:10.5px;width:47px;height:47px;border-radius:11px;background:#4a9dea;overflow:hidden"><div style="position:absolute;left:8px;top:5px;width:30px;height:40px;background:#e9eef3"></div><div style="position:absolute;left:20px;top:8px;width:8px;height:8px;border-radius:50%;background:#b9895a"></div></div>
<div class="b" style="left:1061.5px;top:10.5px;width:47px;height:47px;border-radius:11px;background:#63d760;overflow:hidden"><div style="position:absolute;left:23px;top:10px;width:3px;height:30px;background:#dff7de"></div></div>
<div class="b" style="left:1123.5px;top:10.5px;width:47px;height:47px;border-radius:11px;background:#f0a23c;overflow:hidden"><div style="position:absolute;left:24px;top:6px;width:3px;height:22px;background:#fbe8cc;transform:rotate(45deg)"></div></div>
<div class="b" style="left:1185.5px;top:10.5px;width:47px;height:47px;border-radius:11px;background:#3c3f44;overflow:hidden"><div style="position:absolute;left:7px;top:6px;width:33px;height:33px;border-radius:50%;background:#e9edf2"></div><div style="position:absolute;left:13px;top:12px;width:21px;height:21px;border-radius:50%;background:#3a78d8"></div></div>
<div class="b" style="left:1248.5px;top:10.5px;width:47px;height:47px;border-radius:11px;background:#3f92ef;overflow:hidden"><div style="position:absolute;left:18px;top:8px;font:bold 10px 'Liberation Sans',sans-serif;color:#eef">Y</div></div>
<div class="b" style="left:1309.5px;top:10.5px;width:47px;height:47px;border-radius:11px;background:#d9d9db;overflow:hidden"><div style="position:absolute;left:4px;top:4px;width:39px;height:39px;border-radius:50%;background:#3a3a3c"></div><div style="position:absolute;left:9px;top:9px;width:29px;height:29px;border-radius:50%;border:2px solid #bdbdbd;box-sizing:border-box"></div></div>
<div class="b" style="left:1379.5px;top:8px;width:1.5px;height:20px;background:#a4a4a4"></div>
<div class="b" style="left:1397.5px;top:8px;width:52px;height:52px;border-radius:13px;background:#3d7ef2;overflow:hidden"><div style="position:absolute;left:11px;top:16px;width:22px;height:14px;border-radius:3px;background:#eef3ff"></div></div>
<div class="b" style="left:1461.5px;top:10.5px;width:47px;height:47px;border-radius:11px;background:#dfe5f2;overflow:hidden"><div style="position:absolute;left:5px;top:6px;width:37px;height:40px;border-radius:4px;background:#a9bfe8"></div></div>
<div class="b" style="left:1523.5px;top:10.5px;width:47px;height:47px;border-radius:11px;background:#f2f4f2;overflow:hidden"><div style="position:absolute;left:6px;top:9px;width:35px;height:40px;background:#2f8a4f"></div><div style="position:absolute;left:14px;top:9px;width:27px;height:5px;background:#4fb070"></div></div>
<div class="b" style="left:1592px;top:8px;width:1.5px;height:20px;background:#a4a4a4"></div>
<div class="b" style="left:1618px;top:6px;width:30px;height:30px;background:#e4e4e4;transform:rotate(-6deg);box-shadow:0 0 0 1px #cfcfcf"></div>
<div class="b" style="left:1624px;top:10px;width:30px;height:30px;background:#f1f1f1;box-shadow:0 0 0 1px #cfcfcf"></div>
<div class="b" style="left:1671px;top:17px;width:56px;height:20px;background:#f6f6f6"></div>
<div class="b" style="left:1741px;top:7px;width:38px;height:30px;border-radius:4px;background:#dcdcdc"></div>
<div class="b" style="left:1746px;top:5px;width:28px;height:9px;border-radius:3px;background:repeating-linear-gradient(45deg,#8c8c8c 0 2px,#cfcfcf 2px 4px)"></div>
</div>
<svg class="b" style="left:12px;top:11px;" width="18" height="18" viewBox="0 0 18 18"><path d="M8.4 1.8 L14.6 4.4 V8.6 Q14.6 13.4 8.4 16.1 Q2.1 13.4 2.1 8.6 V4.4 Z" fill="#2ed857" stroke="#05260f" stroke-width="1" stroke-linejoin="round"/><path d="M5.4 8.9 L7.6 11.1 L11.5 6.6" fill="none" stroke="#072d13" stroke-width="1.7" stroke-linecap="round" stroke-linejoin="round"/></svg>
<div class="b" style="left:0px;top:1157px;width:2240px;height:53px;background:#1a1a1a"></div>
<svg class="b" style="left:32px;top:1160px;" width="30" height="28" viewBox="0 0 30 28"><rect x="10.4" y="3" width="8.2" height="14" rx="4.1" fill="#b4b4b4"/><path d="M7.4 12.4 Q7.4 19.4 14.5 19.4 Q21.6 19.4 21.6 12.4" fill="none" stroke="#b4b4b4" stroke-width="1.6"/><path d="M14.5 19.4 V24 M10.6 24.4 H18.4" stroke="#b4b4b4" stroke-width="1.6" fill="none"/><path d="M26 2 L3 25.6" stroke="#1a1a1a" stroke-width="4"/><path d="M26 2 L3 25.6" stroke="#e4594b" stroke-width="1.7" stroke-linecap="round"/></svg>
<svg class="b" style="left:72px;top:1169.8px;" width="12" height="9" viewBox="0 0 12 9"><path d="M2.8 6.4 L6 3 L9.2 6.4" fill="none" stroke="#c9c9c9" stroke-width="1.5" stroke-linecap="round" stroke-linejoin="round"/></svg>
<div class="t" style="left:24.00px;top:1190.00px;font-size:12.6px;line-height:14px;color:#c9c9c9;letter-spacing:-0.224px;-webkit-text-stroke:0.25px #c9c9c9;">Unmute</div>
<svg class="b" style="left:124px;top:1160px;" width="30" height="28" viewBox="0 0 30 28"><rect x="2.8" y="7" width="17.4" height="13.6" rx="3" fill="#b4b4b4"/><path d="M21.4 12 L27.4 8.2 V19.6 L21.4 15.8 Z" fill="#b4b4b4"/><path d="M27 2 L3.6 25.6" stroke="#1a1a1a" stroke-width="4"/><path d="M27 2 L3.6 25.6" stroke="#e4594b" stroke-width="1.7" stroke-linecap="round"/></svg>
<svg class="b" style="left:170.2px;top:1169.8px;" width="12" height="9" viewBox="0 0 12 9"><path d="M2.8 6.4 L6 3 L9.2 6.4" fill="none" stroke="#c9c9c9" stroke-width="1.5" stroke-linecap="round" stroke-linejoin="round"/></svg>
<div class="t" style="left:109.30px;top:1190.00px;font-size:12.6px;line-height:14px;color:#c9c9c9;letter-spacing:-0.351px;-webkit-text-stroke:0.25px #c9c9c9;">Start Video</div>
<svg class="b" style="left:888px;top:1164px;" width="26" height="20" viewBox="0 0 26 20"><circle cx="8.6" cy="6" r="4.2" fill="#b4b4b4"/><path d="M1 18.4 Q1 11.6 8.6 11.6 Q16.2 11.6 16.2 18.4 Z" fill="#b4b4b4"/><circle cx="18.4" cy="6.8" r="3.4" fill="#b4b4b4"/><path d="M17.6 18.4 Q17.8 13.4 15.4 11.8 Q24.6 10.6 24.6 18.4 Z" fill="#b4b4b4"/></svg>
<div class="t" style="left:917.00px;top:1165.00px;font-size:12.6px;line-height:14px;color:#c9c9c9;letter-spacing:-0.215px;">66</div>
<svg class="b" style="left:948px;top:1169.8px;" width="12" height="9" viewBox="0 0 12 9"><path d="M2.8 6.4 L6 3 L9.2 6.4" fill="none" stroke="#c9c9c9" stroke-width="1.5" stroke-linecap="round" stroke-linejoin="round"/></svg>
<div class="t" style="left:869.60px;top:1190.00px;font-size:12.6px;line-height:14px;color:#c9c9c9;letter-spacing:-0.312px;-webkit-text-stroke:0.25px #c9c9c9;">Participants</div>
<svg class="b" style="left:1000px;top:1164px;" width="22" height="20" viewBox="0 0 22 20"><path d="M4 1 H18 Q21 1 21 4 V11.4 Q21 14.4 18 14.4 H11 L6.4 18.6 V14.4 H4 Q1 14.4 1 11.4 V4 Q1 1 4 1 Z" fill="#b4b4b4"/></svg>
<svg class="b" style="left:1038px;top:1169.8px;" width="12" height="9" viewBox="0 0 12 9"><path d="M2.8 6.4 L6 3 L9.2 6.4" fill="none" stroke="#c9c9c9" stroke-width="1.5" stroke-linecap="round" stroke-linejoin="round"/></svg>
<div class="t" style="left:998.90px;top:1190.00px;font-size:12.6px;line-height:14px;color:#c9c9c9;letter-spacing:-0.805px;-webkit-text-stroke:0.25px #c9c9c9;">Chat</div>
<div class="b" style="left:1093px;top:1165px;width:24px;height:17.5px;background:#23d959;border-radius:3.5px"></div>
<svg class="b" style="left:1098px;top:1167px;" width="14" height="14" viewBox="0 0 14 14"><path d="M7 11.4 V3.4 M3.4 6.6 L7 2.8 L10.6 6.6" fill="none" stroke="#0d2a14" stroke-width="2" stroke-linecap="round" stroke-linejoin="round"/></svg>
<div class="t" style="left:1069.95px;top:1190.00px;font-size:12.6px;line-height:14px;color:#2fdc63;letter-spacing:-0.759px;-webkit-text-stroke:0.25px #2fdc63;">Share Screen</div>
<svg class="b" style="left:1182px;top:1162px;" width="24" height="24" viewBox="0 0 24 24"><circle cx="12" cy="12" r="9.6" fill="none" stroke="#b4b4b4" stroke-width="1.6"/><circle cx="12" cy="12" r="6.9" fill="#b4b4b4"/></svg>
<div class="t" style="left:1174.95px;top:1190.00px;font-size:12.6px;line-height:14px;color:#c9c9c9;letter-spacing:-0.744px;-webkit-text-stroke:0.25px #c9c9c9;">Record</div>
<svg class="b" style="left:1262px;top:1161px;" width="26" height="26" viewBox="0 0 26 26"><circle cx="12" cy="14" r="9" fill="#b4b4b4"/><circle cx="8.8" cy="11.6" r="1.3" fill="#1a1a1a"/><circle cx="15.2" cy="11.6" r="1.3" fill="#1a1a1a"/><path d="M7.6 15.6 Q12 20.6 16.4 15.6" fill="none" stroke="#1a1a1a" stroke-width="1.5" stroke-linecap="round"/><circle cx="20.6" cy="5.6" r="5" fill="#1a1a1a"/><path d="M20.6 2.2 V9 M17.2 5.6 H24" stroke="#b4b4b4" stroke-width="1.5"/></svg>
<svg class="b" style="left:1296px;top:1169.8px;" width="12" height="9" viewBox="0 0 12 9"><path d="M2.8 6.4 L6 3 L9.2 6.4" fill="none" stroke="#c9c9c9" stroke-width="1.5" stroke-linecap="round" stroke-linejoin="round"/></svg>
<div class="t" style="left:1248.00px;top:1190.00px;font-size:12.6px;line-height:14px;color:#c9c9c9;letter-spacing:-0.629px;-webkit-text-stroke:0.25px #c9c9c9;">Reactions</div>
<svg class="b" style="left:1344px;top:1164px;" width="20" height="20" viewBox="0 0 20 20"><path d="M8 2.4 H4.6 Q2.4 2.4 2.4 4.6 V8 M12 17.6 H15.4 Q17.6 17.6 17.6 15.4 V12" fill="none" stroke="#b4b4b4" stroke-width="1.7" stroke-linecap="round"/><circle cx="14.8" cy="5.2" r="2.6" fill="none" stroke="#b4b4b4" stroke-width="1.6"/><circle cx="5.2" cy="14.8" r="2.6" fill="none" stroke="#b4b4b4" stroke-width="1.6"/></svg>
<div class="t" style="left:1340.00px;top:1190.00px;font-size:12.6px;line-height:14px;color:#c9c9c9;letter-spacing:-0.573px;-webkit-text-stroke:0.25px #c9c9c9;">Apps</div>
<svg class="b" style="left:1432px;top:1164px;" width="24" height="20" viewBox="0 0 24 20"><path d="M9 14.4 H4 Q2 14.4 2 12.4 V4 Q2 2 4 2 H18.6 Q20.6 2 20.6 4 V10" fill="none" stroke="#b4b4b4" stroke-width="1.7" stroke-linecap="round"/><rect x="11.4" y="12.6" width="9.6" height="3.8" rx="1.2" fill="#b4b4b4"/></svg>
<div class="t" style="left:1409.45px;top:1190.00px;font-size:12.6px;line-height:14px;color:#c9c9c9;letter-spacing:-0.323px;-webkit-text-stroke:0.25px #c9c9c9;">Whiteboards</div>
<div class="b" style="left:2167.5px;top:1171px;width:60px;height:25px;background:#c9302c;border-radius:6px"></div>
<div class="t" style="left:2181.00px;top:1177.00px;font-size:12.6px;line-height:14px;font-weight:bold;color:#fff;letter-spacing:-0.682px;">Leave</div>
</div></body></html>
